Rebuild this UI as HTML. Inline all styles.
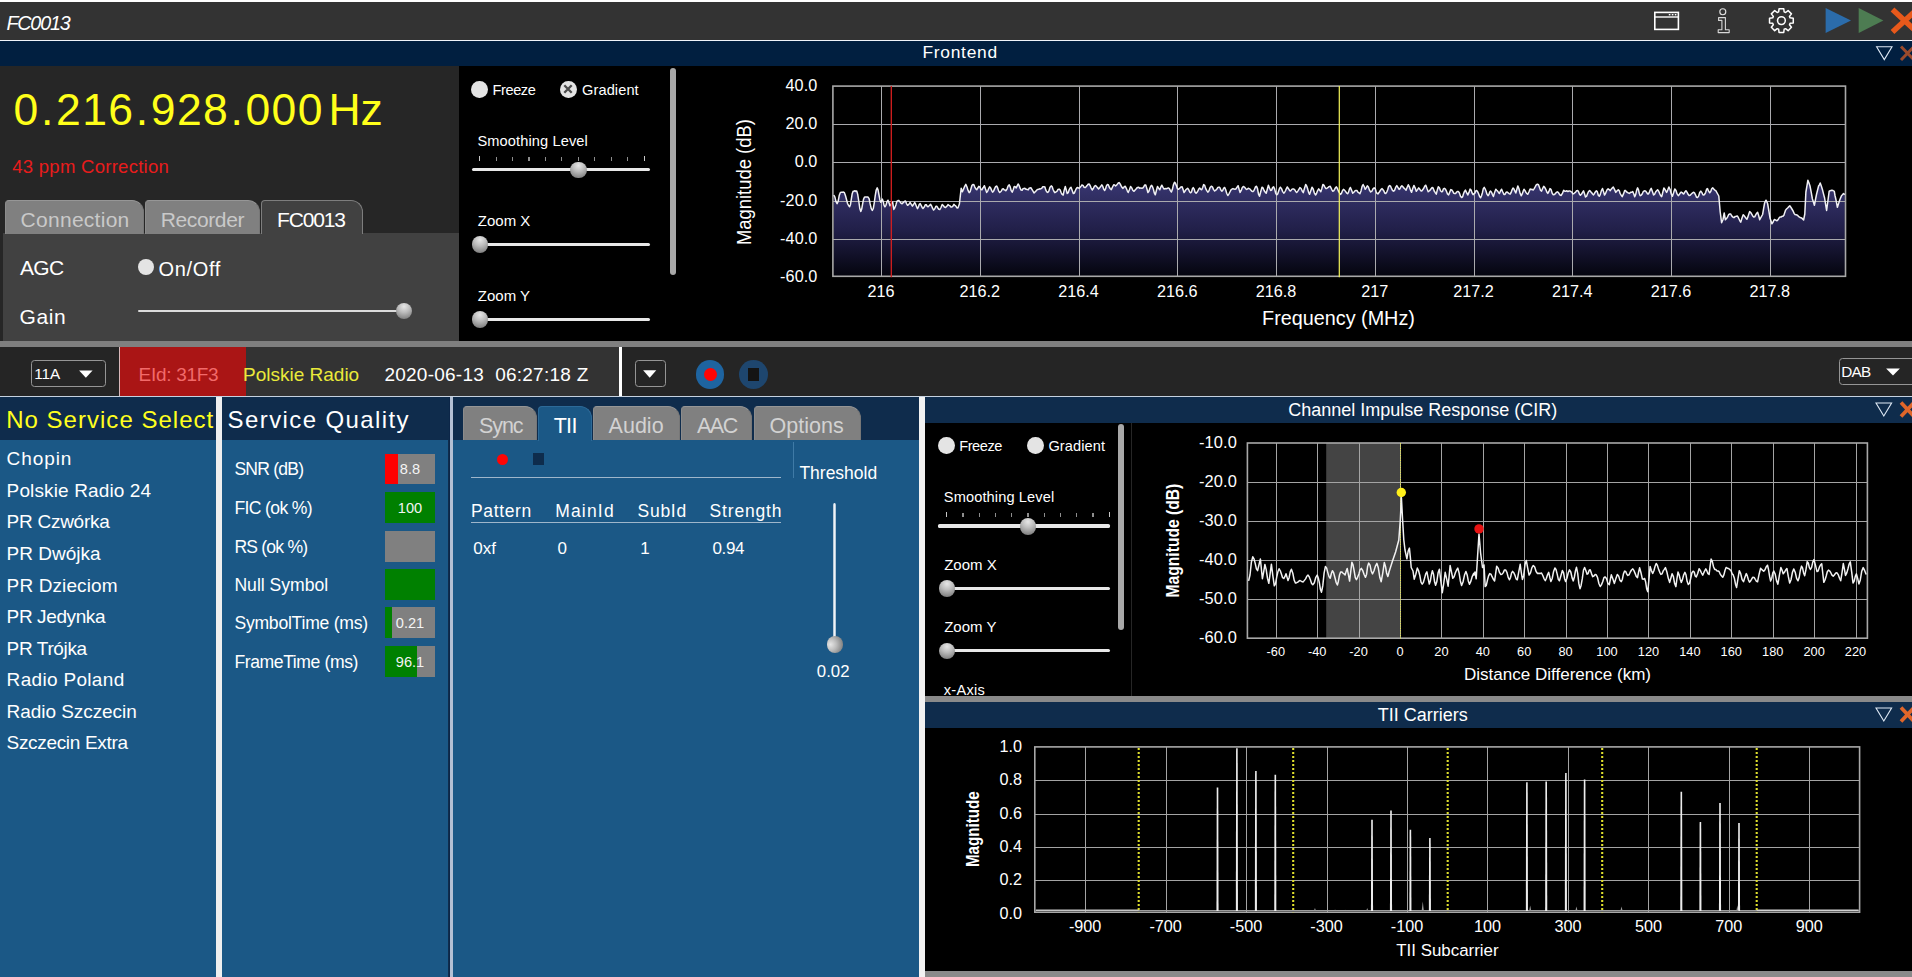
<!DOCTYPE html>
<html lang="en"><head><meta charset="utf-8"><title>FC0013</title>
<style>
html,body{margin:0;padding:0;}
body{width:1912px;height:977px;overflow:hidden;background:#000;position:relative;font-family:"Liberation Sans",sans-serif;}
#root{position:absolute;left:0;top:0;width:1912px;height:977px;overflow:hidden;}
#root div,#root span,#root svg{position:absolute;}
.t{white-space:nowrap;line-height:1;}
.tab{box-sizing:border-box;border:1px solid #8c8c8c;border-top-color:#969696;border-right-color:#777;border-bottom:none;border-radius:4px 12px 0 0;background:#808080;}
.knob{width:16.6px;height:16.6px;border-radius:50%;background:radial-gradient(circle at 50% 22%,#e6e6e6 0%,#bcbcbc 40%,#868686 80%,#6c6c6c 100%);}
.radio{width:16.6px;height:16.8px;border-radius:50%;background:#e4e4e4;}
.track{height:3.2px;background:#e8e8e8;border-radius:1.6px;}
.p{font-style:normal;margin:0 1.27px 0 1.2px;}
svg text{font-family:"Liberation Sans",sans-serif;}
</style></head><body><div id="root">

<div style="left:0px;top:0px;width:1912px;height:2px;background:#ffffff;"></div>
<div style="left:0px;top:2px;width:1912px;height:38px;background:#333333;"></div>
<div style="left:0px;top:39.6px;width:1912px;height:1.5px;background:#f0f4fa;"></div>
<span class="t" id="t1" style="left:6.4px;top:14.28px;font-size:19.7px;color:#fff;font-style:italic;letter-spacing:-1.13px;">FC0013</span>
<div style="left:0px;top:41px;width:1912px;height:25px;background:#011f40;"></div>
<span class="t" id="t2" style="left:922.4px;top:44.00px;font-size:17.4px;color:#fff;letter-spacing:0.74px;">Frontend</span>
<svg style="left:0;top:0" width="1912" height="70" viewBox="0 0 1912 70">
<rect x="1654.8" y="12.4" width="23.6" height="17" fill="none" stroke="#fff" stroke-width="1.6"/>
<line x1="1654.8" y1="17" x2="1678.4" y2="17" stroke="#fff" stroke-width="1.4"/>
<rect x="1668.8" y="14" width="1.6" height="1.4" fill="#fff"/>
<rect x="1671.8" y="14" width="1.6" height="1.4" fill="#fff"/>
<rect x="1674.8" y="14" width="1.6" height="1.4" fill="#fff"/>
<circle cx="1722.8" cy="11.7" r="3.0" fill="none" stroke="#e2e2e2" stroke-width="1.15"/>
<path d="M1718.6 17.6 H1725.4 V29.8 H1729.2 V32.6 H1718.2 V29.8 H1721.9 V20.4 H1718.6 Z" fill="none" stroke="#d8d8d8" stroke-width="1.1" stroke-linejoin="round"/>
<path d="M1779.04 8.73 L1783.76 8.73 L1784.14 11.92 L1785.59 12.52 L1788.12 10.54 L1791.46 13.88 L1789.48 16.41 L1790.08 17.86 L1793.27 18.24 L1793.27 22.96 L1790.08 23.34 L1789.48 24.79 L1791.46 27.32 L1788.12 30.66 L1785.59 28.68 L1784.14 29.28 L1783.76 32.47 L1779.04 32.47 L1778.66 29.28 L1777.21 28.68 L1774.68 30.66 L1771.34 27.32 L1773.32 24.79 L1772.72 23.34 L1769.53 22.96 L1769.53 18.24 L1772.72 17.86 L1773.32 16.41 L1771.34 13.88 L1774.68 10.54 L1777.21 12.52 L1778.66 11.92 Z" fill="none" stroke="#fff" stroke-width="1.5" stroke-linejoin="round"/>
<circle cx="1781.4" cy="20.6" r="3.9" fill="none" stroke="#fff" stroke-width="1.5"/>
<path d="M1825.6 8 L1851 20.5 L1825.6 33 Z" fill="#2b6cab"/>
<path d="M1858.7 8 L1883.4 20.5 L1858.7 33 Z" fill="#4d7c52"/>
<path d="M1892.5 9.5 L1917 32 M1917 9.5 L1892.5 32" stroke="#e8591b" stroke-width="5.5" fill="none"/>
<path d="M1876.6 46.8 H1892 L1884.3 59.6 Z" fill="none" stroke="#dfe9f5" stroke-width="1.1"/>
<path d="M1901 46.5 L1914 60 M1914 46.5 L1901 60" stroke="#9a4a2c" stroke-width="3" fill="none"/>
</svg>
<div style="left:0px;top:66px;width:459px;height:275px;background:#262626;"></div>
<span class="t" style="left:13.6px;top:87.76px;font-size:44.5px;color:#ffff1a;letter-spacing:1.41px;">0<i class="p">.</i>216<i class="p">.</i>928<i class="p">.</i>000</span>
<span class="t" style="left:328.4px;top:87.76px;font-size:44.5px;color:#ffff1a;letter-spacing:0px;">Hz</span>
<span class="t" id="t3" style="left:12.2px;top:157.96px;font-size:18.5px;color:#e81c1c;letter-spacing:0.28px;">43 ppm Correction</span>
<div style="left:3px;top:233px;width:456px;height:108px;background:#414141;"></div>
<div class="tab" style="left:5px;top:200px;width:139px;height:34px;"></div>
<div class="tab" style="left:145px;top:200px;width:115px;height:34px;"></div>
<div class="tab" style="left:261px;top:200px;width:102px;height:34px;background:#414141;border-color:#7e7e7e;"></div>
<span class="t" id="t4" style="left:20.6px;top:209.04px;font-size:21px;color:#c9c9c9;letter-spacing:0.27px;">Connection</span>
<span class="t" id="t5" style="left:160.8px;top:209.04px;font-size:21px;color:#c9c9c9;letter-spacing:-0.39px;">Recorder</span>
<span class="t" id="t6" style="left:277px;top:209.04px;font-size:21px;color:#fff;letter-spacing:-1.15px;">FC0013</span>
<span class="t" id="t7" style="left:20px;top:257.34px;font-size:21px;color:#fff;letter-spacing:-0.7px;">AGC</span>
<div class="radio" style="left:137.6px;top:258.6px;"></div>
<span class="t" id="t8" style="left:158.6px;top:258.83px;font-size:20px;color:#fff;letter-spacing:0.65px;">On/Off</span>
<span class="t" id="t9" style="left:19.6px;top:305.74px;font-size:21px;color:#fff;letter-spacing:0.60px;">Gain</span>
<div class="track" style="left:138px;top:309.6px;width:266px;height:2.6px;background:#dcdcdc;"></div>
<div class="knob" style="left:395.6px;top:302.6px;"></div>
<div style="left:459px;top:66px;width:1453px;height:275px;background:#000000;"></div>
<div class="radio" style="left:471.2px;top:81.2px;"></div>
<span class="t" style="left:492.6px;top:82.57px;font-size:14.6px;color:#fff;letter-spacing:-0.45px;">Freeze</span>
<div class="radio" style="left:560.2px;top:81.2px;"></div>
<svg style="left:560.2px;top:81.2px" width="16" height="16" viewBox="0 0 16 16"><path d="M4.3 4.3 L11.7 11.7 M11.7 4.3 L4.3 11.7" stroke="#4c4c4c" stroke-width="2.3" fill="none"/></svg>
<span class="t" style="left:582px;top:82.57px;font-size:14.6px;color:#fff;letter-spacing:0.1px;">Gradient</span>
<span class="t" style="left:477.4px;top:133.87px;font-size:14.6px;color:#fff;letter-spacing:0.12px;">Smoothing Level</span>
<div style="left:479.09999999999997px;top:156.1px;width:1.2px;height:5px;background:#c8c8c8;"></div>
<div style="left:495.5px;top:157.3px;width:1.2px;height:3.8px;background:#8e8e8e;"></div>
<div style="left:512.0px;top:157.3px;width:1.2px;height:3.8px;background:#8e8e8e;"></div>
<div style="left:528.4px;top:157.3px;width:1.2px;height:3.8px;background:#8e8e8e;"></div>
<div style="left:544.9px;top:157.3px;width:1.2px;height:3.8px;background:#8e8e8e;"></div>
<div style="left:561.3px;top:157.3px;width:1.2px;height:3.8px;background:#8e8e8e;"></div>
<div style="left:577.6999999999999px;top:157.3px;width:1.2px;height:3.8px;background:#8e8e8e;"></div>
<div style="left:594.1999999999999px;top:157.3px;width:1.2px;height:3.8px;background:#8e8e8e;"></div>
<div style="left:610.6px;top:157.3px;width:1.2px;height:3.8px;background:#8e8e8e;"></div>
<div style="left:627.1px;top:157.3px;width:1.2px;height:3.8px;background:#8e8e8e;"></div>
<div style="left:643.5px;top:156.1px;width:1.2px;height:5px;background:#c8c8c8;"></div>
<div class="track" style="left:471.6px;top:168.2px;width:178.6px;"></div>
<div class="knob" style="left:570.4px;top:161.8px;"></div>
<span class="t" style="left:477.8px;top:213.27px;font-size:15px;color:#fff;">Zoom X</span>
<div class="track" style="left:476px;top:243px;width:174.2px;"></div>
<div class="knob" style="left:471.8px;top:236.4px;"></div>
<span class="t" style="left:477.8px;top:288.47px;font-size:15px;color:#fff;">Zoom Y</span>
<div class="track" style="left:476px;top:317.6px;width:174.2px;"></div>
<div class="knob" style="left:471.8px;top:311.2px;"></div>
<div style="left:670.2px;top:68px;width:6px;height:207px;background:#a8a8a8;border-radius:3px;"></div>
<svg style="left:0;top:66px" width="1912" height="275" viewBox="0 66 1912 275">
<defs><linearGradient id="sg" gradientUnits="userSpaceOnUse" x1="0" y1="184" x2="0" y2="277"><stop offset="0" stop-color="#37356f"/><stop offset="0.5" stop-color="#211f48"/><stop offset="1" stop-color="#04040d"/></linearGradient></defs>
<polygon points="833.4,276.3 833.8,195.0 834.9,197.1 836.0,201.6 837.1,203.7 838.2,201.2 839.3,195.2 840.4,192.4 841.4,192.3 842.4,192.2 843.4,192.0 844.4,192.7 845.5,195.7 846.5,199.5 847.5,203.3 848.6,205.5 849.6,206.8 850.5,204.4 851.4,198.7 852.2,193.7 853.1,191.2 854.0,191.3 854.9,190.7 855.8,191.4 856.7,191.0 857.7,194.4 858.8,201.3 859.8,208.5 860.8,211.4 861.7,209.1 862.6,204.0 863.5,199.4 864.4,197.3 865.3,196.9 866.2,197.0 867.1,196.9 868.0,197.1 869.1,198.7 870.1,203.7 871.2,208.4 872.3,210.4 873.3,208.5 874.3,202.6 875.2,195.8 876.2,190.0 877.2,187.9 878.1,190.1 879.0,195.0 879.9,199.9 880.8,202.2 881.5,201.0 882.3,199.1 883.2,201.4 884.0,205.1 884.9,206.8 885.9,205.3 887.0,201.7 888.0,200.2 889.0,202.8 890.0,205.8 890.9,204.7 891.7,202.8 892.6,202.2 893.8,209.4 894.8,207.8 895.9,204.9 896.9,201.3 898.0,200.5 899.0,200.6 900.0,201.9 901.1,203.3 902.1,203.7 903.2,202.6 904.4,201.5 905.5,201.0 906.5,203.6 907.6,205.3 908.8,204.4 910.1,202.4 911.3,204.4 912.4,206.1 913.5,204.5 914.6,202.5 915.6,204.2 916.6,206.7 917.5,208.6 918.4,206.9 919.3,204.3 920.2,203.6 921.1,205.3 922.1,207.4 923.0,208.4 924.2,207.1 925.4,204.7 926.3,204.7 927.2,206.3 928.1,206.7 929.4,205.5 930.6,204.3 931.6,206.0 932.6,208.4 933.6,210.0 934.8,208.7 935.9,206.2 936.9,206.3 937.9,208.0 938.8,209.3 939.8,209.6 941.0,207.5 942.2,204.5 943.3,205.5 944.4,207.0 945.5,207.5 946.8,206.4 948.0,204.6 949.0,205.4 949.9,205.7 950.9,206.9 951.9,207.0 952.9,206.2 953.9,204.4 954.9,205.3 955.9,206.1 956.9,207.8 957.9,208.0 959.4,204.0 960.3,196.0 961.2,188.2 962.4,191.7 963.5,189.3 964.7,186.3 965.8,184.4 966.9,186.7 968.1,190.6 969.2,192.6 970.1,191.8 971.1,188.2 972.0,185.3 972.9,184.5 973.9,184.8 974.8,187.1 975.8,188.9 976.8,189.7 977.8,188.0 978.8,186.3 979.8,186.9 980.8,189.3 981.9,189.8 982.7,188.3 983.5,187.2 984.4,185.7 985.5,189.1 986.7,192.4 987.7,191.1 988.7,188.5 989.6,186.8 990.6,187.9 991.6,190.4 992.6,192.2 993.6,191.1 994.6,188.6 995.6,186.7 996.6,186.0 997.6,187.7 998.6,190.9 999.7,192.5 1000.6,191.7 1001.5,190.8 1002.4,188.9 1003.3,188.8 1004.1,189.7 1005.0,190.0 1005.8,190.8 1007.0,189.1 1008.1,186.0 1009.2,184.9 1010.2,186.9 1011.2,190.7 1012.2,192.2 1013.2,189.7 1014.2,186.6 1015.2,186.8 1016.2,187.9 1017.2,185.9 1018.1,184.0 1019.1,185.4 1020.1,188.2 1021.1,190.1 1022.1,190.3 1023.0,188.7 1024.0,188.5 1024.9,188.3 1026.1,189.3 1027.3,189.6 1028.2,189.9 1029.1,188.3 1030.0,187.9 1030.9,187.7 1031.9,189.3 1033.0,191.2 1034.0,193.0 1035.0,192.0 1035.9,191.1 1036.9,189.9 1037.8,189.4 1038.7,189.3 1039.6,188.8 1040.5,188.9 1041.7,188.3 1042.8,186.8 1043.9,186.7 1044.9,187.0 1045.8,190.1 1046.8,191.8 1047.7,192.4 1048.9,191.0 1050.0,187.2 1051.2,185.9 1052.1,186.6 1053.0,189.3 1053.9,191.3 1054.8,192.6 1055.9,192.0 1056.9,191.3 1058.0,189.5 1059.1,189.1 1060.1,189.8 1061.1,192.6 1062.1,194.3 1063.2,195.0 1064.2,190.2 1065.3,186.4 1066.2,189.8 1067.2,193.5 1068.2,192.7 1069.1,189.9 1070.1,188.0 1071.0,187.2 1072.2,190.6 1073.3,193.6 1074.3,193.1 1075.3,190.7 1076.2,188.8 1077.2,187.5 1078.3,187.8 1079.3,188.3 1080.2,187.3 1081.1,186.1 1081.9,184.9 1083.0,185.4 1084.1,187.3 1085.2,187.6 1086.1,186.8 1087.1,185.6 1088.1,184.2 1089.1,184.0 1090.1,185.5 1091.2,188.1 1092.2,190.0 1093.3,188.5 1094.4,186.3 1095.4,185.5 1096.5,186.3 1097.5,187.8 1098.6,188.9 1099.7,187.8 1100.7,186.4 1101.8,184.8 1102.8,186.4 1103.8,189.4 1104.7,190.5 1105.6,188.7 1106.4,185.9 1107.3,184.6 1108.3,184.8 1109.3,187.3 1110.3,188.7 1111.3,189.6 1112.5,187.0 1113.7,184.8 1114.7,184.9 1115.6,186.0 1116.5,185.2 1117.4,184.1 1118.3,183.0 1119.2,182.6 1120.1,183.9 1121.0,185.7 1121.9,187.3 1122.8,188.4 1123.7,187.7 1124.5,186.4 1125.3,186.3 1126.3,188.3 1127.3,190.8 1128.2,192.5 1129.4,189.8 1130.6,186.5 1131.7,187.9 1132.9,190.5 1134.0,191.3 1134.9,190.2 1135.8,189.2 1136.8,188.0 1137.7,187.5 1138.7,187.2 1139.7,188.3 1140.8,187.9 1141.8,188.2 1142.8,188.0 1143.8,186.7 1144.8,185.0 1145.8,185.1 1146.9,188.7 1147.9,192.6 1148.9,191.3 1149.8,188.5 1150.8,186.1 1151.7,185.4 1152.6,186.9 1153.5,189.6 1154.4,193.2 1155.3,194.8 1156.4,190.5 1157.5,186.4 1158.6,188.1 1159.8,189.8 1160.8,187.1 1161.8,185.2 1163.0,187.3 1164.1,189.0 1165.2,188.6 1166.3,188.7 1167.4,188.3 1168.4,187.9 1169.4,188.6 1170.4,190.6 1171.4,192.0 1172.4,189.3 1173.4,184.9 1174.5,182.2 1175.4,183.1 1176.4,185.6 1177.4,188.7 1178.4,189.3 1179.3,188.7 1180.2,187.8 1181.1,186.9 1182.1,186.7 1183.0,189.3 1184.0,192.5 1184.9,191.3 1185.8,189.8 1186.7,189.0 1187.6,188.3 1188.6,189.5 1189.7,192.0 1190.7,192.8 1191.5,192.0 1192.4,188.7 1193.2,187.6 1194.2,189.2 1195.1,192.3 1196.1,193.3 1197.0,192.2 1197.9,190.9 1198.8,189.0 1199.7,188.0 1200.7,189.3 1201.7,189.7 1202.7,187.5 1203.6,184.6 1204.7,185.4 1205.7,188.6 1206.8,190.7 1207.8,192.2 1209.0,190.7 1210.1,187.6 1211.3,186.2 1212.4,186.9 1213.6,189.6 1214.7,191.0 1215.8,190.2 1216.9,189.0 1217.9,187.4 1219.0,187.1 1219.9,187.7 1220.9,190.1 1221.9,191.2 1222.8,190.3 1223.7,188.1 1224.7,187.5 1225.7,189.7 1226.7,193.2 1227.8,195.5 1228.8,194.1 1229.9,192.0 1231.0,189.8 1232.1,189.0 1233.0,188.6 1233.9,189.1 1234.9,189.2 1235.8,189.0 1236.9,187.4 1238.1,185.7 1239.1,189.3 1240.1,192.4 1241.2,190.4 1242.2,187.8 1243.3,186.5 1244.4,187.1 1245.4,188.2 1246.5,189.4 1247.4,189.1 1248.3,188.3 1249.1,188.6 1250.1,189.1 1251.0,190.2 1251.9,191.2 1252.8,191.6 1253.8,190.7 1254.7,188.7 1255.6,186.6 1256.5,186.3 1257.5,188.6 1258.5,194.1 1259.5,196.2 1260.7,191.8 1262.0,187.2 1263.0,187.9 1264.1,190.5 1265.1,192.1 1266.2,193.3 1267.3,189.2 1268.4,185.2 1269.5,188.0 1270.6,190.5 1271.6,190.1 1272.6,187.6 1273.6,186.8 1274.6,188.9 1275.7,193.3 1276.7,194.8 1277.7,194.0 1278.6,191.2 1279.5,188.4 1280.4,187.2 1281.5,188.6 1282.7,191.6 1283.8,193.2 1284.7,192.1 1285.6,190.5 1286.5,188.3 1287.3,187.0 1288.5,188.7 1289.7,190.7 1290.7,190.9 1291.8,189.4 1292.8,188.9 1293.8,189.0 1294.8,189.9 1295.7,191.4 1296.7,192.5 1297.8,191.1 1298.9,189.3 1299.9,187.6 1301.1,188.5 1302.2,191.0 1303.3,192.6 1304.5,188.2 1305.7,184.4 1306.7,186.1 1307.7,189.1 1308.6,192.3 1309.6,194.3 1310.8,190.8 1312.0,187.2 1313.2,189.0 1314.3,192.8 1315.5,195.0 1316.5,193.5 1317.6,190.6 1318.7,188.9 1319.7,190.3 1320.8,191.7 1321.9,188.2 1322.9,184.5 1323.9,185.1 1324.8,186.8 1325.7,188.4 1326.7,188.5 1327.8,187.7 1329.0,186.6 1330.2,186.2 1331.0,187.9 1331.9,189.8 1332.7,191.2 1333.7,190.8 1334.6,189.3 1335.5,187.7 1336.4,186.9 1337.4,188.5 1338.4,191.0 1339.5,192.9 1340.5,194.4 1341.5,193.3 1342.5,190.6 1343.4,189.4 1344.5,190.1 1345.5,191.4 1346.5,192.8 1347.6,193.7 1348.5,192.4 1349.4,189.1 1350.4,187.5 1351.5,190.1 1352.7,193.2 1353.8,192.2 1354.9,190.9 1355.9,190.4 1356.9,190.5 1357.9,192.1 1358.9,192.8 1359.9,193.7 1361.0,190.9 1362.1,186.4 1363.1,184.5 1364.2,186.5 1365.2,189.3 1366.2,187.8 1367.3,185.9 1368.4,187.0 1369.6,190.4 1370.7,192.0 1371.9,191.2 1373.0,188.8 1374.2,187.8 1375.1,188.3 1376.0,191.2 1377.0,193.4 1377.9,193.9 1379.0,192.6 1380.0,191.0 1381.1,189.4 1382.1,188.6 1383.0,189.7 1383.9,191.0 1384.8,193.1 1385.7,193.5 1386.7,192.1 1387.7,189.8 1388.6,186.5 1389.6,185.6 1390.6,186.2 1391.6,188.7 1392.6,190.7 1393.6,191.2 1394.7,190.1 1395.8,187.1 1396.8,185.6 1397.9,187.4 1399.1,189.4 1400.0,188.7 1400.9,186.8 1401.9,185.7 1402.9,186.7 1404.0,188.2 1405.0,189.0 1406.1,190.1 1407.2,187.3 1408.3,184.8 1409.4,186.9 1410.5,190.1 1411.6,192.3 1412.7,188.5 1413.9,185.4 1415.1,187.8 1416.3,191.2 1417.5,189.6 1418.7,187.9 1419.7,189.1 1420.7,190.7 1421.7,191.0 1422.7,189.7 1423.8,188.3 1424.8,186.0 1425.8,185.2 1427.0,188.6 1428.2,191.7 1429.2,191.0 1430.1,190.1 1431.1,188.7 1432.1,187.5 1433.1,188.0 1434.2,191.0 1435.3,192.7 1436.3,194.1 1437.3,189.9 1438.3,186.8 1439.4,187.8 1440.5,190.8 1441.6,191.8 1442.5,191.5 1443.4,188.8 1444.3,188.3 1445.4,189.1 1446.4,191.1 1447.5,194.0 1448.6,194.9 1449.7,192.2 1450.8,189.6 1451.8,190.0 1452.8,191.4 1453.7,193.3 1454.7,193.5 1455.6,193.6 1456.5,192.2 1457.4,191.6 1458.3,191.4 1459.4,193.0 1460.5,196.3 1461.6,197.5 1462.6,196.9 1463.5,193.7 1464.5,191.4 1465.4,190.1 1466.6,192.6 1467.8,195.0 1469.0,192.4 1470.1,189.1 1471.1,190.1 1472.1,193.0 1473.1,194.7 1474.0,193.7 1474.9,193.1 1475.8,190.9 1476.7,190.5 1477.6,191.6 1478.6,193.8 1479.6,196.6 1480.6,197.8 1481.5,195.8 1482.4,192.7 1483.3,188.6 1484.2,187.4 1485.1,188.8 1486.1,191.3 1487.0,194.2 1488.0,195.7 1488.9,194.5 1489.7,192.1 1490.6,191.1 1491.5,192.2 1492.5,194.6 1493.4,196.5 1494.6,192.4 1495.8,189.3 1496.7,190.3 1497.6,191.1 1498.5,192.4 1499.4,193.4 1500.5,191.0 1501.6,189.2 1502.7,191.8 1503.9,194.4 1505.0,194.4 1506.1,192.3 1507.2,192.0 1508.2,192.9 1509.1,193.6 1510.1,194.2 1511.1,192.5 1512.0,189.9 1513.0,188.0 1514.0,189.1 1514.9,191.2 1515.8,193.0 1516.8,189.5 1517.8,185.9 1518.9,188.5 1520.1,193.4 1521.3,195.8 1522.2,193.9 1523.1,191.4 1524.0,189.3 1524.9,190.4 1525.9,192.4 1526.8,193.5 1527.8,194.3 1528.9,192.0 1530.1,189.0 1531.1,189.5 1532.1,189.3 1533.2,190.0 1534.2,188.6 1535.3,186.7 1536.4,184.6 1537.4,184.2 1538.5,184.7 1539.5,187.5 1540.6,190.4 1541.6,191.1 1542.6,188.5 1543.7,186.3 1544.7,187.3 1545.8,189.3 1546.8,192.0 1547.8,193.4 1548.9,191.5 1550.0,188.6 1551.1,189.6 1552.2,193.2 1553.3,194.7 1554.3,194.6 1555.3,193.6 1556.3,192.5 1557.4,191.8 1558.3,192.3 1559.3,194.0 1560.3,195.3 1561.2,195.4 1562.5,193.1 1563.7,190.2 1564.8,191.2 1565.8,191.2 1566.9,190.7 1567.9,191.6 1569.0,190.9 1570.1,191.0 1571.0,191.6 1571.9,192.1 1572.8,193.8 1573.7,193.7 1574.7,192.8 1575.6,192.2 1576.6,190.7 1577.6,190.6 1578.5,191.6 1579.4,194.0 1580.4,195.3 1581.4,194.3 1582.5,192.3 1583.5,190.8 1584.5,193.7 1585.5,197.0 1586.6,196.2 1587.6,193.6 1588.7,191.3 1589.7,190.6 1590.6,191.6 1591.5,192.5 1592.4,193.8 1593.3,194.9 1594.3,193.7 1595.3,192.0 1596.4,190.7 1597.3,191.8 1598.3,195.2 1599.3,196.3 1600.3,194.4 1601.4,190.6 1602.5,188.5 1603.5,191.4 1604.5,195.1 1605.4,193.7 1606.3,191.5 1607.2,189.5 1608.1,188.8 1609.2,189.6 1610.2,190.7 1611.2,189.2 1612.3,187.9 1613.3,187.0 1614.6,189.6 1615.8,192.4 1617.0,190.9 1618.3,189.7 1619.3,190.8 1620.2,193.7 1621.2,195.2 1622.2,196.6 1623.5,193.9 1624.7,190.4 1625.6,190.6 1626.6,192.0 1627.5,192.3 1628.5,193.1 1629.5,193.4 1630.6,192.3 1631.6,192.3 1632.7,191.5 1633.7,193.8 1634.7,196.7 1635.7,194.4 1636.6,190.3 1637.6,187.9 1638.4,189.5 1639.3,193.5 1640.2,195.7 1641.3,195.1 1642.3,193.7 1643.4,191.3 1644.4,190.8 1645.5,190.9 1646.5,192.2 1647.5,193.9 1648.5,193.9 1649.4,192.1 1650.3,189.8 1651.2,188.3 1652.4,191.5 1653.6,194.9 1654.6,194.3 1655.6,192.0 1656.6,190.7 1657.6,189.8 1658.7,191.2 1659.7,193.6 1660.7,195.7 1661.7,196.6 1662.8,192.3 1663.9,187.9 1664.8,189.1 1665.7,190.9 1666.6,192.4 1667.7,190.1 1668.9,187.0 1670.1,189.5 1671.2,193.9 1672.4,196.3 1673.6,192.8 1674.8,188.9 1676.0,190.5 1677.1,193.9 1678.3,195.7 1679.3,194.5 1680.2,193.1 1681.2,192.1 1682.1,192.6 1682.9,193.5 1683.8,194.0 1684.9,191.9 1685.9,190.7 1687.0,192.1 1688.1,194.3 1689.1,195.6 1690.2,195.2 1691.3,194.0 1692.3,193.2 1693.4,192.3 1694.4,192.7 1695.5,194.8 1696.5,197.3 1697.5,197.5 1698.6,196.1 1699.7,192.5 1700.8,191.1 1701.8,192.4 1702.9,194.7 1703.9,195.1 1704.8,194.1 1705.7,192.3 1706.6,189.2 1707.5,188.6 1708.6,191.2 1709.7,192.8 1710.7,191.5 1711.7,188.7 1712.7,187.8 1713.7,188.9 1714.8,190.1 1715.8,190.7 1718.8,196.0 1720.2,212.0 1721.6,222.7 1723.0,219.5 1724.2,213.0 1725.4,219.8 1726.5,218.6 1727.5,217.1 1728.6,214.7 1729.7,214.0 1730.6,213.9 1731.5,215.5 1732.4,216.7 1733.3,217.4 1734.3,217.4 1735.3,216.4 1736.3,216.3 1737.3,215.9 1738.4,217.7 1739.6,220.3 1740.7,222.2 1742.0,218.1 1743.2,214.8 1744.1,215.6 1745.1,217.0 1746.0,218.2 1746.9,219.3 1747.9,216.9 1748.8,214.0 1749.7,211.6 1750.7,212.5 1751.7,214.1 1752.7,215.9 1753.7,217.0 1754.7,216.8 1755.7,214.8 1756.7,213.2 1757.6,212.3 1758.7,215.8 1759.7,219.7 1762.6,214.5 1763.6,208.6 1764.6,203.0 1766.0,200.2 1766.8,201.8 1767.6,203.5 1768.8,210.5 1770.0,218.0 1771.0,220.9 1771.9,223.7 1772.8,222.6 1773.6,220.8 1774.5,219.5 1775.8,220.1 1777.0,220.8 1778.0,219.8 1779.0,218.0 1780.0,217.0 1781.0,217.1 1782.0,216.3 1783.0,216.2 1783.9,215.3 1784.8,212.4 1785.6,210.1 1786.5,209.0 1787.6,208.0 1788.7,206.9 1789.8,205.8 1791.0,207.5 1792.2,209.5 1793.1,211.0 1794.1,213.4 1795.0,214.5 1796.2,214.8 1797.5,215.2 1798.8,216.7 1800.0,217.5 1801.0,217.8 1802.0,218.2 1802.8,219.3 1803.6,220.0 1804.8,214.0 1805.9,192.0 1806.9,186.2 1807.9,180.2 1809.0,183.1 1810.0,186.0 1811.2,192.2 1812.4,199.0 1813.4,202.1 1814.4,205.3 1815.5,199.5 1816.6,194.0 1817.6,190.0 1818.6,186.0 1819.4,184.8 1820.2,183.0 1821.3,186.1 1822.4,189.5 1823.5,193.9 1824.6,198.0 1825.6,204.3 1826.6,210.4 1828.0,200.0 1829.2,191.2 1830.1,190.8 1830.9,190.4 1831.8,190.2 1833.0,190.5 1834.3,191.4 1835.0,195.5 1835.8,199.0 1836.6,203.0 1837.4,207.3 1838.4,204.1 1839.4,201.0 1840.5,198.1 1841.6,195.5 1842.5,194.7 1843.5,193.5 1844.8,194.6 1845.0,276.3" fill="url(#sg)"/>
<line x1="881.5" y1="86.1" x2="881.5" y2="276.3" stroke="#aaaaae" stroke-width="1"/>
<line x1="980.5" y1="86.1" x2="980.5" y2="276.3" stroke="#aaaaae" stroke-width="1"/>
<line x1="1079.5" y1="86.1" x2="1079.5" y2="276.3" stroke="#aaaaae" stroke-width="1"/>
<line x1="1177.5" y1="86.1" x2="1177.5" y2="276.3" stroke="#aaaaae" stroke-width="1"/>
<line x1="1276.5" y1="86.1" x2="1276.5" y2="276.3" stroke="#aaaaae" stroke-width="1"/>
<line x1="1375.5" y1="86.1" x2="1375.5" y2="276.3" stroke="#aaaaae" stroke-width="1"/>
<line x1="1474.5" y1="86.1" x2="1474.5" y2="276.3" stroke="#aaaaae" stroke-width="1"/>
<line x1="1572.5" y1="86.1" x2="1572.5" y2="276.3" stroke="#aaaaae" stroke-width="1"/>
<line x1="1671.5" y1="86.1" x2="1671.5" y2="276.3" stroke="#aaaaae" stroke-width="1"/>
<line x1="1770.5" y1="86.1" x2="1770.5" y2="276.3" stroke="#aaaaae" stroke-width="1"/>
<line x1="832.9" y1="124.5" x2="1845.5" y2="124.5" stroke="#aaaaae" stroke-width="1"/>
<line x1="832.9" y1="162.5" x2="1845.5" y2="162.5" stroke="#aaaaae" stroke-width="1"/>
<line x1="832.9" y1="201.5" x2="1845.5" y2="201.5" stroke="#aaaaae" stroke-width="1"/>
<line x1="832.9" y1="239.5" x2="1845.5" y2="239.5" stroke="#aaaaae" stroke-width="1"/>
<rect x="832.9" y="86.1" width="1012.6" height="190.2" fill="none" stroke="#a8a8a8" stroke-width="1.6"/>
<polyline points="833.8,195.0 834.9,197.1 836.0,201.6 837.1,203.7 838.2,201.2 839.3,195.2 840.4,192.4 841.4,192.3 842.4,192.2 843.4,192.0 844.4,192.7 845.5,195.7 846.5,199.5 847.5,203.3 848.6,205.5 849.6,206.8 850.5,204.4 851.4,198.7 852.2,193.7 853.1,191.2 854.0,191.3 854.9,190.7 855.8,191.4 856.7,191.0 857.7,194.4 858.8,201.3 859.8,208.5 860.8,211.4 861.7,209.1 862.6,204.0 863.5,199.4 864.4,197.3 865.3,196.9 866.2,197.0 867.1,196.9 868.0,197.1 869.1,198.7 870.1,203.7 871.2,208.4 872.3,210.4 873.3,208.5 874.3,202.6 875.2,195.8 876.2,190.0 877.2,187.9 878.1,190.1 879.0,195.0 879.9,199.9 880.8,202.2 881.5,201.0 882.3,199.1 883.2,201.4 884.0,205.1 884.9,206.8 885.9,205.3 887.0,201.7 888.0,200.2 889.0,202.8 890.0,205.8 890.9,204.7 891.7,202.8 892.6,202.2 893.8,209.4 894.8,207.8 895.9,204.9 896.9,201.3 898.0,200.5 899.0,200.6 900.0,201.9 901.1,203.3 902.1,203.7 903.2,202.6 904.4,201.5 905.5,201.0 906.5,203.6 907.6,205.3 908.8,204.4 910.1,202.4 911.3,204.4 912.4,206.1 913.5,204.5 914.6,202.5 915.6,204.2 916.6,206.7 917.5,208.6 918.4,206.9 919.3,204.3 920.2,203.6 921.1,205.3 922.1,207.4 923.0,208.4 924.2,207.1 925.4,204.7 926.3,204.7 927.2,206.3 928.1,206.7 929.4,205.5 930.6,204.3 931.6,206.0 932.6,208.4 933.6,210.0 934.8,208.7 935.9,206.2 936.9,206.3 937.9,208.0 938.8,209.3 939.8,209.6 941.0,207.5 942.2,204.5 943.3,205.5 944.4,207.0 945.5,207.5 946.8,206.4 948.0,204.6 949.0,205.4 949.9,205.7 950.9,206.9 951.9,207.0 952.9,206.2 953.9,204.4 954.9,205.3 955.9,206.1 956.9,207.8 957.9,208.0 959.4,204.0 960.3,196.0 961.2,188.2 962.4,191.7 963.5,189.3 964.7,186.3 965.8,184.4 966.9,186.7 968.1,190.6 969.2,192.6 970.1,191.8 971.1,188.2 972.0,185.3 972.9,184.5 973.9,184.8 974.8,187.1 975.8,188.9 976.8,189.7 977.8,188.0 978.8,186.3 979.8,186.9 980.8,189.3 981.9,189.8 982.7,188.3 983.5,187.2 984.4,185.7 985.5,189.1 986.7,192.4 987.7,191.1 988.7,188.5 989.6,186.8 990.6,187.9 991.6,190.4 992.6,192.2 993.6,191.1 994.6,188.6 995.6,186.7 996.6,186.0 997.6,187.7 998.6,190.9 999.7,192.5 1000.6,191.7 1001.5,190.8 1002.4,188.9 1003.3,188.8 1004.1,189.7 1005.0,190.0 1005.8,190.8 1007.0,189.1 1008.1,186.0 1009.2,184.9 1010.2,186.9 1011.2,190.7 1012.2,192.2 1013.2,189.7 1014.2,186.6 1015.2,186.8 1016.2,187.9 1017.2,185.9 1018.1,184.0 1019.1,185.4 1020.1,188.2 1021.1,190.1 1022.1,190.3 1023.0,188.7 1024.0,188.5 1024.9,188.3 1026.1,189.3 1027.3,189.6 1028.2,189.9 1029.1,188.3 1030.0,187.9 1030.9,187.7 1031.9,189.3 1033.0,191.2 1034.0,193.0 1035.0,192.0 1035.9,191.1 1036.9,189.9 1037.8,189.4 1038.7,189.3 1039.6,188.8 1040.5,188.9 1041.7,188.3 1042.8,186.8 1043.9,186.7 1044.9,187.0 1045.8,190.1 1046.8,191.8 1047.7,192.4 1048.9,191.0 1050.0,187.2 1051.2,185.9 1052.1,186.6 1053.0,189.3 1053.9,191.3 1054.8,192.6 1055.9,192.0 1056.9,191.3 1058.0,189.5 1059.1,189.1 1060.1,189.8 1061.1,192.6 1062.1,194.3 1063.2,195.0 1064.2,190.2 1065.3,186.4 1066.2,189.8 1067.2,193.5 1068.2,192.7 1069.1,189.9 1070.1,188.0 1071.0,187.2 1072.2,190.6 1073.3,193.6 1074.3,193.1 1075.3,190.7 1076.2,188.8 1077.2,187.5 1078.3,187.8 1079.3,188.3 1080.2,187.3 1081.1,186.1 1081.9,184.9 1083.0,185.4 1084.1,187.3 1085.2,187.6 1086.1,186.8 1087.1,185.6 1088.1,184.2 1089.1,184.0 1090.1,185.5 1091.2,188.1 1092.2,190.0 1093.3,188.5 1094.4,186.3 1095.4,185.5 1096.5,186.3 1097.5,187.8 1098.6,188.9 1099.7,187.8 1100.7,186.4 1101.8,184.8 1102.8,186.4 1103.8,189.4 1104.7,190.5 1105.6,188.7 1106.4,185.9 1107.3,184.6 1108.3,184.8 1109.3,187.3 1110.3,188.7 1111.3,189.6 1112.5,187.0 1113.7,184.8 1114.7,184.9 1115.6,186.0 1116.5,185.2 1117.4,184.1 1118.3,183.0 1119.2,182.6 1120.1,183.9 1121.0,185.7 1121.9,187.3 1122.8,188.4 1123.7,187.7 1124.5,186.4 1125.3,186.3 1126.3,188.3 1127.3,190.8 1128.2,192.5 1129.4,189.8 1130.6,186.5 1131.7,187.9 1132.9,190.5 1134.0,191.3 1134.9,190.2 1135.8,189.2 1136.8,188.0 1137.7,187.5 1138.7,187.2 1139.7,188.3 1140.8,187.9 1141.8,188.2 1142.8,188.0 1143.8,186.7 1144.8,185.0 1145.8,185.1 1146.9,188.7 1147.9,192.6 1148.9,191.3 1149.8,188.5 1150.8,186.1 1151.7,185.4 1152.6,186.9 1153.5,189.6 1154.4,193.2 1155.3,194.8 1156.4,190.5 1157.5,186.4 1158.6,188.1 1159.8,189.8 1160.8,187.1 1161.8,185.2 1163.0,187.3 1164.1,189.0 1165.2,188.6 1166.3,188.7 1167.4,188.3 1168.4,187.9 1169.4,188.6 1170.4,190.6 1171.4,192.0 1172.4,189.3 1173.4,184.9 1174.5,182.2 1175.4,183.1 1176.4,185.6 1177.4,188.7 1178.4,189.3 1179.3,188.7 1180.2,187.8 1181.1,186.9 1182.1,186.7 1183.0,189.3 1184.0,192.5 1184.9,191.3 1185.8,189.8 1186.7,189.0 1187.6,188.3 1188.6,189.5 1189.7,192.0 1190.7,192.8 1191.5,192.0 1192.4,188.7 1193.2,187.6 1194.2,189.2 1195.1,192.3 1196.1,193.3 1197.0,192.2 1197.9,190.9 1198.8,189.0 1199.7,188.0 1200.7,189.3 1201.7,189.7 1202.7,187.5 1203.6,184.6 1204.7,185.4 1205.7,188.6 1206.8,190.7 1207.8,192.2 1209.0,190.7 1210.1,187.6 1211.3,186.2 1212.4,186.9 1213.6,189.6 1214.7,191.0 1215.8,190.2 1216.9,189.0 1217.9,187.4 1219.0,187.1 1219.9,187.7 1220.9,190.1 1221.9,191.2 1222.8,190.3 1223.7,188.1 1224.7,187.5 1225.7,189.7 1226.7,193.2 1227.8,195.5 1228.8,194.1 1229.9,192.0 1231.0,189.8 1232.1,189.0 1233.0,188.6 1233.9,189.1 1234.9,189.2 1235.8,189.0 1236.9,187.4 1238.1,185.7 1239.1,189.3 1240.1,192.4 1241.2,190.4 1242.2,187.8 1243.3,186.5 1244.4,187.1 1245.4,188.2 1246.5,189.4 1247.4,189.1 1248.3,188.3 1249.1,188.6 1250.1,189.1 1251.0,190.2 1251.9,191.2 1252.8,191.6 1253.8,190.7 1254.7,188.7 1255.6,186.6 1256.5,186.3 1257.5,188.6 1258.5,194.1 1259.5,196.2 1260.7,191.8 1262.0,187.2 1263.0,187.9 1264.1,190.5 1265.1,192.1 1266.2,193.3 1267.3,189.2 1268.4,185.2 1269.5,188.0 1270.6,190.5 1271.6,190.1 1272.6,187.6 1273.6,186.8 1274.6,188.9 1275.7,193.3 1276.7,194.8 1277.7,194.0 1278.6,191.2 1279.5,188.4 1280.4,187.2 1281.5,188.6 1282.7,191.6 1283.8,193.2 1284.7,192.1 1285.6,190.5 1286.5,188.3 1287.3,187.0 1288.5,188.7 1289.7,190.7 1290.7,190.9 1291.8,189.4 1292.8,188.9 1293.8,189.0 1294.8,189.9 1295.7,191.4 1296.7,192.5 1297.8,191.1 1298.9,189.3 1299.9,187.6 1301.1,188.5 1302.2,191.0 1303.3,192.6 1304.5,188.2 1305.7,184.4 1306.7,186.1 1307.7,189.1 1308.6,192.3 1309.6,194.3 1310.8,190.8 1312.0,187.2 1313.2,189.0 1314.3,192.8 1315.5,195.0 1316.5,193.5 1317.6,190.6 1318.7,188.9 1319.7,190.3 1320.8,191.7 1321.9,188.2 1322.9,184.5 1323.9,185.1 1324.8,186.8 1325.7,188.4 1326.7,188.5 1327.8,187.7 1329.0,186.6 1330.2,186.2 1331.0,187.9 1331.9,189.8 1332.7,191.2 1333.7,190.8 1334.6,189.3 1335.5,187.7 1336.4,186.9 1337.4,188.5 1338.4,191.0 1339.5,192.9 1340.5,194.4 1341.5,193.3 1342.5,190.6 1343.4,189.4 1344.5,190.1 1345.5,191.4 1346.5,192.8 1347.6,193.7 1348.5,192.4 1349.4,189.1 1350.4,187.5 1351.5,190.1 1352.7,193.2 1353.8,192.2 1354.9,190.9 1355.9,190.4 1356.9,190.5 1357.9,192.1 1358.9,192.8 1359.9,193.7 1361.0,190.9 1362.1,186.4 1363.1,184.5 1364.2,186.5 1365.2,189.3 1366.2,187.8 1367.3,185.9 1368.4,187.0 1369.6,190.4 1370.7,192.0 1371.9,191.2 1373.0,188.8 1374.2,187.8 1375.1,188.3 1376.0,191.2 1377.0,193.4 1377.9,193.9 1379.0,192.6 1380.0,191.0 1381.1,189.4 1382.1,188.6 1383.0,189.7 1383.9,191.0 1384.8,193.1 1385.7,193.5 1386.7,192.1 1387.7,189.8 1388.6,186.5 1389.6,185.6 1390.6,186.2 1391.6,188.7 1392.6,190.7 1393.6,191.2 1394.7,190.1 1395.8,187.1 1396.8,185.6 1397.9,187.4 1399.1,189.4 1400.0,188.7 1400.9,186.8 1401.9,185.7 1402.9,186.7 1404.0,188.2 1405.0,189.0 1406.1,190.1 1407.2,187.3 1408.3,184.8 1409.4,186.9 1410.5,190.1 1411.6,192.3 1412.7,188.5 1413.9,185.4 1415.1,187.8 1416.3,191.2 1417.5,189.6 1418.7,187.9 1419.7,189.1 1420.7,190.7 1421.7,191.0 1422.7,189.7 1423.8,188.3 1424.8,186.0 1425.8,185.2 1427.0,188.6 1428.2,191.7 1429.2,191.0 1430.1,190.1 1431.1,188.7 1432.1,187.5 1433.1,188.0 1434.2,191.0 1435.3,192.7 1436.3,194.1 1437.3,189.9 1438.3,186.8 1439.4,187.8 1440.5,190.8 1441.6,191.8 1442.5,191.5 1443.4,188.8 1444.3,188.3 1445.4,189.1 1446.4,191.1 1447.5,194.0 1448.6,194.9 1449.7,192.2 1450.8,189.6 1451.8,190.0 1452.8,191.4 1453.7,193.3 1454.7,193.5 1455.6,193.6 1456.5,192.2 1457.4,191.6 1458.3,191.4 1459.4,193.0 1460.5,196.3 1461.6,197.5 1462.6,196.9 1463.5,193.7 1464.5,191.4 1465.4,190.1 1466.6,192.6 1467.8,195.0 1469.0,192.4 1470.1,189.1 1471.1,190.1 1472.1,193.0 1473.1,194.7 1474.0,193.7 1474.9,193.1 1475.8,190.9 1476.7,190.5 1477.6,191.6 1478.6,193.8 1479.6,196.6 1480.6,197.8 1481.5,195.8 1482.4,192.7 1483.3,188.6 1484.2,187.4 1485.1,188.8 1486.1,191.3 1487.0,194.2 1488.0,195.7 1488.9,194.5 1489.7,192.1 1490.6,191.1 1491.5,192.2 1492.5,194.6 1493.4,196.5 1494.6,192.4 1495.8,189.3 1496.7,190.3 1497.6,191.1 1498.5,192.4 1499.4,193.4 1500.5,191.0 1501.6,189.2 1502.7,191.8 1503.9,194.4 1505.0,194.4 1506.1,192.3 1507.2,192.0 1508.2,192.9 1509.1,193.6 1510.1,194.2 1511.1,192.5 1512.0,189.9 1513.0,188.0 1514.0,189.1 1514.9,191.2 1515.8,193.0 1516.8,189.5 1517.8,185.9 1518.9,188.5 1520.1,193.4 1521.3,195.8 1522.2,193.9 1523.1,191.4 1524.0,189.3 1524.9,190.4 1525.9,192.4 1526.8,193.5 1527.8,194.3 1528.9,192.0 1530.1,189.0 1531.1,189.5 1532.1,189.3 1533.2,190.0 1534.2,188.6 1535.3,186.7 1536.4,184.6 1537.4,184.2 1538.5,184.7 1539.5,187.5 1540.6,190.4 1541.6,191.1 1542.6,188.5 1543.7,186.3 1544.7,187.3 1545.8,189.3 1546.8,192.0 1547.8,193.4 1548.9,191.5 1550.0,188.6 1551.1,189.6 1552.2,193.2 1553.3,194.7 1554.3,194.6 1555.3,193.6 1556.3,192.5 1557.4,191.8 1558.3,192.3 1559.3,194.0 1560.3,195.3 1561.2,195.4 1562.5,193.1 1563.7,190.2 1564.8,191.2 1565.8,191.2 1566.9,190.7 1567.9,191.6 1569.0,190.9 1570.1,191.0 1571.0,191.6 1571.9,192.1 1572.8,193.8 1573.7,193.7 1574.7,192.8 1575.6,192.2 1576.6,190.7 1577.6,190.6 1578.5,191.6 1579.4,194.0 1580.4,195.3 1581.4,194.3 1582.5,192.3 1583.5,190.8 1584.5,193.7 1585.5,197.0 1586.6,196.2 1587.6,193.6 1588.7,191.3 1589.7,190.6 1590.6,191.6 1591.5,192.5 1592.4,193.8 1593.3,194.9 1594.3,193.7 1595.3,192.0 1596.4,190.7 1597.3,191.8 1598.3,195.2 1599.3,196.3 1600.3,194.4 1601.4,190.6 1602.5,188.5 1603.5,191.4 1604.5,195.1 1605.4,193.7 1606.3,191.5 1607.2,189.5 1608.1,188.8 1609.2,189.6 1610.2,190.7 1611.2,189.2 1612.3,187.9 1613.3,187.0 1614.6,189.6 1615.8,192.4 1617.0,190.9 1618.3,189.7 1619.3,190.8 1620.2,193.7 1621.2,195.2 1622.2,196.6 1623.5,193.9 1624.7,190.4 1625.6,190.6 1626.6,192.0 1627.5,192.3 1628.5,193.1 1629.5,193.4 1630.6,192.3 1631.6,192.3 1632.7,191.5 1633.7,193.8 1634.7,196.7 1635.7,194.4 1636.6,190.3 1637.6,187.9 1638.4,189.5 1639.3,193.5 1640.2,195.7 1641.3,195.1 1642.3,193.7 1643.4,191.3 1644.4,190.8 1645.5,190.9 1646.5,192.2 1647.5,193.9 1648.5,193.9 1649.4,192.1 1650.3,189.8 1651.2,188.3 1652.4,191.5 1653.6,194.9 1654.6,194.3 1655.6,192.0 1656.6,190.7 1657.6,189.8 1658.7,191.2 1659.7,193.6 1660.7,195.7 1661.7,196.6 1662.8,192.3 1663.9,187.9 1664.8,189.1 1665.7,190.9 1666.6,192.4 1667.7,190.1 1668.9,187.0 1670.1,189.5 1671.2,193.9 1672.4,196.3 1673.6,192.8 1674.8,188.9 1676.0,190.5 1677.1,193.9 1678.3,195.7 1679.3,194.5 1680.2,193.1 1681.2,192.1 1682.1,192.6 1682.9,193.5 1683.8,194.0 1684.9,191.9 1685.9,190.7 1687.0,192.1 1688.1,194.3 1689.1,195.6 1690.2,195.2 1691.3,194.0 1692.3,193.2 1693.4,192.3 1694.4,192.7 1695.5,194.8 1696.5,197.3 1697.5,197.5 1698.6,196.1 1699.7,192.5 1700.8,191.1 1701.8,192.4 1702.9,194.7 1703.9,195.1 1704.8,194.1 1705.7,192.3 1706.6,189.2 1707.5,188.6 1708.6,191.2 1709.7,192.8 1710.7,191.5 1711.7,188.7 1712.7,187.8 1713.7,188.9 1714.8,190.1 1715.8,190.7 1718.8,196.0 1720.2,212.0 1721.6,222.7 1723.0,219.5 1724.2,213.0 1725.4,219.8 1726.5,218.6 1727.5,217.1 1728.6,214.7 1729.7,214.0 1730.6,213.9 1731.5,215.5 1732.4,216.7 1733.3,217.4 1734.3,217.4 1735.3,216.4 1736.3,216.3 1737.3,215.9 1738.4,217.7 1739.6,220.3 1740.7,222.2 1742.0,218.1 1743.2,214.8 1744.1,215.6 1745.1,217.0 1746.0,218.2 1746.9,219.3 1747.9,216.9 1748.8,214.0 1749.7,211.6 1750.7,212.5 1751.7,214.1 1752.7,215.9 1753.7,217.0 1754.7,216.8 1755.7,214.8 1756.7,213.2 1757.6,212.3 1758.7,215.8 1759.7,219.7 1762.6,214.5 1763.6,208.6 1764.6,203.0 1766.0,200.2 1766.8,201.8 1767.6,203.5 1768.8,210.5 1770.0,218.0 1771.0,220.9 1771.9,223.7 1772.8,222.6 1773.6,220.8 1774.5,219.5 1775.8,220.1 1777.0,220.8 1778.0,219.8 1779.0,218.0 1780.0,217.0 1781.0,217.1 1782.0,216.3 1783.0,216.2 1783.9,215.3 1784.8,212.4 1785.6,210.1 1786.5,209.0 1787.6,208.0 1788.7,206.9 1789.8,205.8 1791.0,207.5 1792.2,209.5 1793.1,211.0 1794.1,213.4 1795.0,214.5 1796.2,214.8 1797.5,215.2 1798.8,216.7 1800.0,217.5 1801.0,217.8 1802.0,218.2 1802.8,219.3 1803.6,220.0 1804.8,214.0 1805.9,192.0 1806.9,186.2 1807.9,180.2 1809.0,183.1 1810.0,186.0 1811.2,192.2 1812.4,199.0 1813.4,202.1 1814.4,205.3 1815.5,199.5 1816.6,194.0 1817.6,190.0 1818.6,186.0 1819.4,184.8 1820.2,183.0 1821.3,186.1 1822.4,189.5 1823.5,193.9 1824.6,198.0 1825.6,204.3 1826.6,210.4 1828.0,200.0 1829.2,191.2 1830.1,190.8 1830.9,190.4 1831.8,190.2 1833.0,190.5 1834.3,191.4 1835.0,195.5 1835.8,199.0 1836.6,203.0 1837.4,207.3 1838.4,204.1 1839.4,201.0 1840.5,198.1 1841.6,195.5 1842.5,194.7 1843.5,193.5 1844.8,194.6" fill="none" stroke="#f0f0f4" stroke-width="1.5" stroke-linejoin="round"/>
<line x1="891.3" y1="86.1" x2="891.3" y2="277.3" stroke="#d61f1f" stroke-width="1.3"/>
<line x1="1339.3" y1="86.1" x2="1339.3" y2="277.3" stroke="#f4f45a" stroke-width="1.2"/>
<text x="817.5" y="90.7" font-size="16.2" fill="#fff" text-anchor="end" letter-spacing="0.12">40.0</text>
<text x="817.5" y="129.1" font-size="16.2" fill="#fff" text-anchor="end" letter-spacing="0.12">20.0</text>
<text x="817.5" y="167.4" font-size="16.2" fill="#fff" text-anchor="end" letter-spacing="0.12">0.0</text>
<text x="817.5" y="205.7" font-size="16.2" fill="#fff" text-anchor="end" letter-spacing="0.12">-20.0</text>
<text x="817.5" y="244.1" font-size="16.2" fill="#fff" text-anchor="end" letter-spacing="0.12">-40.0</text>
<text x="817.5" y="282.4" font-size="16.2" fill="#fff" text-anchor="end" letter-spacing="0.12">-60.0</text>
<text x="881.0" y="297" font-size="16.2" fill="#fff" text-anchor="middle">216</text>
<text x="979.7" y="297" font-size="16.2" fill="#fff" text-anchor="middle">216.2</text>
<text x="1078.5" y="297" font-size="16.2" fill="#fff" text-anchor="middle">216.4</text>
<text x="1177.2" y="297" font-size="16.2" fill="#fff" text-anchor="middle">216.6</text>
<text x="1276.0" y="297" font-size="16.2" fill="#fff" text-anchor="middle">216.8</text>
<text x="1374.7" y="297" font-size="16.2" fill="#fff" text-anchor="middle">217</text>
<text x="1473.4" y="297" font-size="16.2" fill="#fff" text-anchor="middle">217.2</text>
<text x="1572.2" y="297" font-size="16.2" fill="#fff" text-anchor="middle">217.4</text>
<text x="1670.9" y="297" font-size="16.2" fill="#fff" text-anchor="middle">217.6</text>
<text x="1769.7" y="297" font-size="16.2" fill="#fff" text-anchor="middle">217.8</text>
<text x="1338.5" y="324.6" font-size="19.8" fill="#fff" text-anchor="middle">Frequency (MHz)</text>
<text transform="translate(751.1,182.1) rotate(-90) scale(0.877,1)" font-size="21" fill="#fff" text-anchor="middle">Magnitude (dB)</text>
</svg>
<div style="left:0px;top:341px;width:1912px;height:6px;background:#7f7f7f;"></div>
<div style="left:0px;top:347px;width:1912px;height:49px;background:#252525;"></div>
<div style="left:120px;top:347px;width:499px;height:49px;background:#333333;"></div>
<div style="left:119px;top:347px;width:1.2px;height:49px;background:#d9b9bb;"></div>
<div style="left:120.2px;top:347px;width:125.8px;height:49px;background:#aa1515;"></div>
<div style="left:618.75px;top:347px;width:3.7px;height:49.6px;background:#ffffff;"></div>
<div style="left:31.4px;top:360px;width:74.2px;height:26.9px;box-sizing:border-box;border:1.1px solid #959595;border-radius:3.5px;"></div>
<span class="t" id="t10" style="left:34.2px;top:366.13px;font-size:15.3px;color:#fff;">11A</span>
<svg style="left:77.6px;top:368.6px" width="16" height="10" viewBox="0 0 16 10"><path d="M1.1 1.4 H14.6 L7.85 8.7 Z" fill="#fff"/></svg>
<span class="t" id="t11" style="left:138.6px;top:364.72px;font-size:19px;color:#f26a6a;letter-spacing:-0.29px;">EId: 31F3</span>
<span class="t" id="t12" style="left:243px;top:364.72px;font-size:19px;color:#eaea3a;">Polskie Radio</span>
<span class="t" id="t13" style="left:384.4px;top:364.72px;font-size:19px;color:#fff;letter-spacing:0.25px;">2020-06-13&nbsp; 06:27:18 Z</span>
<div style="left:635px;top:360px;width:31px;height:27.2px;box-sizing:border-box;border:1.1px solid #959595;border-radius:3.5px;"></div>
<svg style="left:642px;top:368.6px" width="16" height="10" viewBox="0 0 16 10"><path d="M1.1 1.2 H14.3 L7.7 8.7 Z" fill="#fff"/></svg>
<div style="left:695.6px;top:359.8px;width:28.8px;height:28.8px;border-radius:50%;background:#1e64a0;"></div>
<div style="left:703.5px;top:367.9px;width:13px;height:13px;border-radius:50%;background:#ff0505;"></div>
<div style="left:739.3px;top:359.8px;width:28.8px;height:28.8px;border-radius:50%;background:#1e466e;"></div>
<div style="left:748.1px;top:368.1px;width:10.9px;height:12.9px;background:#141414;"></div>
<div style="left:1839.2px;top:358.2px;width:80px;height:27px;box-sizing:border-box;border:1.1px solid #959595;border-radius:3.5px;"></div>
<span class="t" id="t14" style="left:1841.2px;top:364.23px;font-size:15.3px;color:#fff;letter-spacing:-0.75px;">DAB</span>
<svg style="left:1885.4px;top:366.6px" width="16" height="10" viewBox="0 0 16 10"><path d="M1.1 1.4 H14.9 L8 8.4 Z" fill="#fff"/></svg>
<div style="left:0px;top:396px;width:1912px;height:1.2px;background:#c6d2e0;"></div>
<div style="left:0px;top:397px;width:919px;height:580px;background:#0f2c4c;"></div>
<div style="left:0px;top:440px;width:216px;height:537px;background:#1b5886;"></div>
<div style="left:0;top:397px;width:216px;height:43px;overflow:hidden;">
<span class="t" style="left:6.2px;top:10.88px;font-size:24px;color:#ffff1e;letter-spacing:1.02px;">No Service Select</span>
</div>
<div style="left:216px;top:397px;width:6.4px;height:580px;background:#efefef;"></div>
<span class="t" id="t15" style="left:6.6px;top:449.32px;font-size:19px;color:#fff;letter-spacing:0.92px;">Chopin</span>
<span class="t" id="t16" style="left:6.6px;top:480.89px;font-size:19px;color:#fff;letter-spacing:0.13px;">Polskie Radio 24</span>
<span class="t" id="t17" style="left:6.6px;top:512.46px;font-size:19px;color:#fff;letter-spacing:-0.27px;">PR Czwórka</span>
<span class="t" id="t18" style="left:6.6px;top:544.03px;font-size:19px;color:#fff;">PR Dwójka</span>
<span class="t" id="t19" style="left:6.6px;top:575.60px;font-size:19px;color:#fff;letter-spacing:0.12px;">PR Dzieciom</span>
<span class="t" id="t20" style="left:6.6px;top:607.17px;font-size:19px;color:#fff;letter-spacing:-0.39px;">PR Jedynka</span>
<span class="t" id="t21" style="left:6.6px;top:638.74px;font-size:19px;color:#fff;letter-spacing:-0.36px;">PR Trójka</span>
<span class="t" id="t22" style="left:6.6px;top:670.31px;font-size:19px;color:#fff;letter-spacing:0.32px;">Radio Poland</span>
<span class="t" id="t23" style="left:6.6px;top:701.88px;font-size:19px;color:#fff;letter-spacing:-0.06px;">Radio Szczecin</span>
<span class="t" id="t24" style="left:6.6px;top:733.45px;font-size:19px;color:#fff;letter-spacing:-0.33px;">Szczecin Extra</span>
<div style="left:222.4px;top:440px;width:225.6px;height:537px;background:#1b5886;"></div>
<span class="t" id="t25" style="left:227.6px;top:407.88px;font-size:24px;color:#fff;letter-spacing:1.40px;">Service Quality</span>
<div style="left:448.8px;top:397px;width:1px;height:580px;background:#0c2648;"></div>
<div style="left:449.8px;top:397px;width:3.4px;height:580px;background:#b4c0d4;"></div>
<span class="t" id="t26" style="left:234.4px;top:461.20px;font-size:17.6px;color:#fff;letter-spacing:-0.79px;">SNR (dB)</span>
<div style="left:384.5px;top:453.6px;width:50.6px;height:30.9px;background:#808080;"></div>
<div style="left:384.5px;top:453.6px;width:13.5px;height:30.9px;background:#ff0000;"></div>
<span class="t" style="left:410px;transform:translateX(-50%);top:462.47px;font-size:14.6px;color:#f4f4f4;">8.8</span>
<span class="t" id="t27" style="left:234.4px;top:500.00px;font-size:17.6px;color:#fff;letter-spacing:-0.64px;">FIC (ok %)</span>
<div style="left:384.5px;top:492.4px;width:50.6px;height:30.9px;background:#808080;"></div>
<div style="left:384.5px;top:492.4px;width:50.6px;height:30.9px;background:#008000;"></div>
<span class="t" style="left:410px;transform:translateX(-50%);top:501.27px;font-size:14.6px;color:#f4f4f4;">100</span>
<span class="t" id="t28" style="left:234.4px;top:538.70px;font-size:17.6px;color:#fff;letter-spacing:-0.81px;">RS (ok %)</span>
<div style="left:384.5px;top:531.1px;width:50.6px;height:30.9px;background:#808080;"></div>
<span class="t" id="t29" style="left:234.4px;top:576.50px;font-size:17.6px;color:#fff;">Null Symbol</span>
<div style="left:384.5px;top:568.9px;width:50.6px;height:30.9px;background:#808080;"></div>
<div style="left:384.5px;top:568.9px;width:50.6px;height:30.9px;background:#008000;"></div>
<span class="t" id="t30" style="left:234.4px;top:614.90px;font-size:17.6px;color:#fff;letter-spacing:-0.24px;">SymbolTime (ms)</span>
<div style="left:384.5px;top:607.3px;width:50.6px;height:30.9px;background:#808080;"></div>
<div style="left:384.5px;top:607.3px;width:7.5px;height:30.9px;background:#008000;"></div>
<span class="t" style="left:410px;transform:translateX(-50%);top:616.17px;font-size:14.6px;color:#f4f4f4;">0.21</span>
<span class="t" id="t31" style="left:234.4px;top:653.60px;font-size:17.6px;color:#fff;letter-spacing:-0.41px;">FrameTime (ms)</span>
<div style="left:384.5px;top:646.0px;width:50.6px;height:30.9px;background:#808080;"></div>
<div style="left:384.5px;top:646.0px;width:32.3px;height:30.9px;background:#008000;"></div>
<span class="t" style="left:410px;transform:translateX(-50%);top:654.87px;font-size:14.6px;color:#f4f4f4;">96.1</span>
<div style="left:453.2px;top:440px;width:465.4px;height:537px;background:#1b5886;"></div>
<div class="tab" style="left:463px;top:406.2px;width:74.0px;height:34px;"></div>
<span class="t" style="left:479px;top:415.90px;font-size:21.5px;color:#d2d2d2;letter-spacing:-1.1px;">Sync</span>
<div class="tab" style="left:538.4px;top:406.2px;width:54.0px;height:34.4px;background:#1b5886;border-color:#2d6a98;"></div>
<span class="t" style="left:553.7px;top:415.90px;font-size:21.5px;color:#fff;letter-spacing:-0.7px;">TII</span>
<div class="tab" style="left:593px;top:406.2px;width:87.0px;height:34px;"></div>
<span class="t" style="left:608.6px;top:415.90px;font-size:21.5px;color:#d2d2d2;letter-spacing:0px;">Audio</span>
<div class="tab" style="left:681.2px;top:406.2px;width:71.0px;height:34px;"></div>
<span class="t" style="left:697px;top:415.90px;font-size:21.5px;color:#d2d2d2;letter-spacing:-1.5px;">AAC</span>
<div class="tab" style="left:753.6px;top:406.2px;width:107.4px;height:34px;"></div>
<span class="t" style="left:769.6px;top:415.90px;font-size:21.5px;color:#d2d2d2;letter-spacing:0px;">Options</span>
<div style="left:496.6px;top:453.5px;width:11px;height:11px;border-radius:50%;background:#ff0505;"></div>
<div style="left:533px;top:453.4px;width:11px;height:11.2px;background:#0e2c4c;"></div>
<div style="left:471px;top:476.7px;width:310px;height:1.2px;background:#9fb6cb;"></div>
<div style="left:793.2px;top:441.5px;width:1.1px;height:36.5px;background:#3f7aa6;"></div>
<span class="t" id="t32" style="left:799.4px;top:464.65px;font-size:17.5px;color:#fff;">Threshold</span>
<span class="t" id="t33" style="left:471px;top:502.95px;font-size:17.5px;color:#fff;letter-spacing:0.63px;">Pattern</span>
<span class="t" id="t34" style="left:555.2px;top:502.95px;font-size:17.5px;color:#fff;letter-spacing:1.18px;">MainId</span>
<span class="t" id="t35" style="left:637.6px;top:502.95px;font-size:17.5px;color:#fff;letter-spacing:0.70px;">SubId</span>
<span class="t" id="t36" style="left:709.6px;top:502.95px;font-size:17.5px;color:#fff;letter-spacing:0.81px;">Strength</span>
<div style="left:471px;top:521.9px;width:310px;height:1.2px;background:#9fb6cb;"></div>
<span class="t" id="t37" style="left:473.2px;top:540.20px;font-size:17px;color:#fff;">0xf</span>
<span class="t" style="left:557.4px;top:540.20px;font-size:17px;color:#fff;">0</span>
<span class="t" style="left:640.2px;top:540.20px;font-size:17px;color:#fff;">1</span>
<span class="t" id="t38" style="left:712.4px;top:540.20px;font-size:17px;color:#fff;letter-spacing:-0.33px;">0.94</span>
<div style="left:833.2px;top:502.5px;width:3.1px;height:136px;background:linear-gradient(90deg,#9db5cb,#f0f4f8 50%,#9db5cb);border-radius:1.5px;"></div>
<div class="knob" style="left:826.9px;top:636.1px;background:radial-gradient(circle at 22% 50%,#e6e6e6 0%,#bcbcbc 40%,#868686 80%,#6c6c6c 100%);"></div>
<span class="t" style="left:833.2px;transform:translateX(-50%);top:663.59px;font-size:16.8px;color:#fff;">0.02</span>
<div style="left:918.8px;top:397px;width:6.6px;height:580px;background:#f2f2f2;"></div>
<div style="left:925.4px;top:397.2px;width:987px;height:25.6px;background:#0f2c4c;"></div>
<span class="t" style="left:1422.8px;transform:translateX(-50%);top:400.81px;font-size:18px;color:#fff;">Channel Impulse Response (CIR)</span>
<svg style="left:1860px;top:397px" width="52" height="26" viewBox="0 0 52 26">
<path d="M16 6 H31.6 L23.8 19 Z" fill="none" stroke="#dfe9f5" stroke-width="1.1"/>
<path d="M41 5.6 L54 19.4 M54 5.6 L41 19.4" stroke="#e0662a" stroke-width="3.7" fill="none"/>
</svg>
<div style="left:925.4px;top:422.8px;width:987px;height:273.2px;background:#000;"></div>
<div class="radio" style="left:938px;top:437.2px;"></div>
<span class="t" style="left:959.2px;top:438.57px;font-size:14.6px;color:#fff;letter-spacing:-0.45px;">Freeze</span>
<div class="radio" style="left:1027px;top:437.2px;"></div>
<span class="t" style="left:1048.4px;top:438.57px;font-size:14.6px;color:#fff;letter-spacing:0.1px;">Gradient</span>
<span class="t" style="left:943.8px;top:489.87px;font-size:14.6px;color:#fff;letter-spacing:0.12px;">Smoothing Level</span>
<div style="left:946.1px;top:512.2px;width:1.2px;height:5px;background:#c8c8c8;"></div>
<div style="left:962.4px;top:513.4px;width:1.2px;height:3.8px;background:#8e8e8e;"></div>
<div style="left:978.6px;top:513.4px;width:1.2px;height:3.8px;background:#8e8e8e;"></div>
<div style="left:994.9px;top:513.4px;width:1.2px;height:3.8px;background:#8e8e8e;"></div>
<div style="left:1011.1px;top:513.4px;width:1.2px;height:3.8px;background:#8e8e8e;"></div>
<div style="left:1027.4px;top:513.4px;width:1.2px;height:3.8px;background:#8e8e8e;"></div>
<div style="left:1043.7px;top:513.4px;width:1.2px;height:3.8px;background:#8e8e8e;"></div>
<div style="left:1059.9px;top:513.4px;width:1.2px;height:3.8px;background:#8e8e8e;"></div>
<div style="left:1076.2px;top:513.4px;width:1.2px;height:3.8px;background:#8e8e8e;"></div>
<div style="left:1092.4px;top:513.4px;width:1.2px;height:3.8px;background:#8e8e8e;"></div>
<div style="left:1108.7px;top:512.2px;width:1.2px;height:5px;background:#c8c8c8;"></div>
<div class="track" style="left:938px;top:524.4px;width:172.2px;"></div>
<div class="knob" style="left:1019.8px;top:518px;"></div>
<span class="t" style="left:944.2px;top:557.47px;font-size:15px;color:#fff;">Zoom X</span>
<div class="track" style="left:943px;top:586.7px;width:167.2px;"></div>
<div class="knob" style="left:938.6px;top:580.2px;"></div>
<span class="t" style="left:944.2px;top:619.47px;font-size:15px;color:#fff;">Zoom Y</span>
<div class="track" style="left:943px;top:649.3px;width:167.2px;"></div>
<div class="knob" style="left:938.6px;top:642.8px;"></div>
<div style="left:925.4px;top:670px;width:200px;height:26.1px;overflow:hidden;">
<span class="t" style="left:18.4px;top:12.57px;font-size:14.6px;color:#fff;letter-spacing:0.25px;">x-Axis</span>
</div>
<div style="left:1117.6px;top:424.4px;width:6px;height:206px;background:#a8a8a8;border-radius:3px;"></div>
<div style="left:1131.2px;top:422.8px;width:1px;height:273.2px;background:#262626;"></div>
<svg style="left:1132px;top:423px" width="780" height="273" viewBox="1132 423 780 273">
<rect x="1326.2" y="443.0" width="74.3" height="195.2" fill="#444444"/>
<line x1="1276.5" y1="443.0" x2="1276.5" y2="638.2" stroke="#a4a4a4" stroke-width="1"/>
<line x1="1317.5" y1="443.0" x2="1317.5" y2="638.2" stroke="#a4a4a4" stroke-width="1"/>
<line x1="1359.5" y1="443.0" x2="1359.5" y2="638.2" stroke="#a4a4a4" stroke-width="1"/>
<line x1="1400.5" y1="443.0" x2="1400.5" y2="638.2" stroke="#a4a4a4" stroke-width="1"/>
<line x1="1441.5" y1="443.0" x2="1441.5" y2="638.2" stroke="#a4a4a4" stroke-width="1"/>
<line x1="1483.5" y1="443.0" x2="1483.5" y2="638.2" stroke="#a4a4a4" stroke-width="1"/>
<line x1="1524.5" y1="443.0" x2="1524.5" y2="638.2" stroke="#a4a4a4" stroke-width="1"/>
<line x1="1566.5" y1="443.0" x2="1566.5" y2="638.2" stroke="#a4a4a4" stroke-width="1"/>
<line x1="1607.5" y1="443.0" x2="1607.5" y2="638.2" stroke="#a4a4a4" stroke-width="1"/>
<line x1="1648.5" y1="443.0" x2="1648.5" y2="638.2" stroke="#a4a4a4" stroke-width="1"/>
<line x1="1690.5" y1="443.0" x2="1690.5" y2="638.2" stroke="#a4a4a4" stroke-width="1"/>
<line x1="1731.5" y1="443.0" x2="1731.5" y2="638.2" stroke="#a4a4a4" stroke-width="1"/>
<line x1="1773.5" y1="443.0" x2="1773.5" y2="638.2" stroke="#a4a4a4" stroke-width="1"/>
<line x1="1814.5" y1="443.0" x2="1814.5" y2="638.2" stroke="#a4a4a4" stroke-width="1"/>
<line x1="1856.5" y1="443.0" x2="1856.5" y2="638.2" stroke="#a4a4a4" stroke-width="1"/>
<line x1="1247.4" y1="482.5" x2="1867.4" y2="482.5" stroke="#a4a4a4" stroke-width="1"/>
<line x1="1247.4" y1="521.5" x2="1867.4" y2="521.5" stroke="#a4a4a4" stroke-width="1"/>
<line x1="1247.4" y1="560.5" x2="1867.4" y2="560.5" stroke="#a4a4a4" stroke-width="1"/>
<line x1="1247.4" y1="599.5" x2="1867.4" y2="599.5" stroke="#a4a4a4" stroke-width="1"/>
<rect x="1247.4" y="443.0" width="620.0" height="195.2" fill="none" stroke="#a8a8a8" stroke-width="1.6"/>
<line x1="1400.5" y1="443.0" x2="1400.5" y2="639.2" stroke="#e8e84a" stroke-width="1" stroke-dasharray="1.2 1.2"/>
<polyline points="1248.6,580.9 1250.0,575.0 1251.4,562.1 1252.8,556.8 1254.0,558.9 1255.2,563.4 1256.4,568.9 1257.6,570.6 1259.0,564.8 1260.4,559.0 1261.4,569.3 1262.4,578.7 1263.7,571.8 1264.9,564.4 1266.2,569.6 1267.5,578.4 1268.8,583.3 1270.1,573.9 1271.4,564.2 1272.8,575.3 1274.3,585.8 1275.5,583.8 1276.7,577.1 1277.9,571.8 1279.1,568.8 1280.3,570.8 1281.4,573.9 1282.6,577.7 1283.8,578.5 1284.9,576.7 1286.0,573.7 1287.0,577.1 1288.0,580.5 1289.1,577.7 1290.3,571.6 1291.4,569.3 1292.8,573.2 1294.2,580.3 1295.5,583.1 1296.7,582.7 1297.8,582.1 1298.9,581.2 1300.1,580.5 1301.6,581.5 1303.2,581.9 1304.4,580.4 1305.6,578.9 1306.8,576.2 1308.0,575.1 1309.2,576.7 1310.4,579.8 1311.6,583.4 1312.8,584.7 1314.3,582.7 1315.7,577.7 1317.2,575.1 1318.3,578.0 1319.4,583.0 1320.4,589.3 1321.5,592.2 1322.8,585.7 1324.1,573.2 1325.4,566.6 1326.6,567.9 1327.8,572.6 1329.0,576.6 1330.2,578.2 1331.3,573.8 1332.4,570.7 1333.6,572.7 1334.9,577.5 1336.1,582.3 1337.4,585.0 1338.4,581.2 1339.5,575.0 1340.6,572.0 1341.7,571.9 1342.8,573.0 1344.0,573.8 1345.1,574.9 1346.1,571.6 1347.2,568.4 1348.4,574.6 1349.6,581.1 1350.7,571.8 1351.9,562.2 1353.0,564.8 1354.1,570.5 1355.3,577.6 1356.4,579.6 1357.6,577.3 1358.9,573.9 1360.1,569.7 1361.3,568.4 1362.7,570.5 1364.1,574.5 1365.5,577.3 1366.6,574.2 1367.6,566.4 1368.7,563.1 1370.0,565.1 1371.3,571.3 1372.5,573.9 1374.0,570.7 1375.4,566.1 1376.9,563.4 1378.3,567.8 1379.8,577.3 1381.2,581.7 1382.8,572.8 1384.3,562.5 1385.5,566.5 1386.6,573.0 1387.8,576.6 1388.2,575.5 1389.0,572.0 1392.5,561.0 1395.6,552.0 1398.8,540.0 1400.3,520.0 1401.4,497.5 1402.6,520.0 1403.8,540.0 1405.0,550.0 1406.9,558.8 1408.2,551.0 1409.4,548.1 1410.4,558.0 1411.2,567.5 1413.0,571.0 1414.2,579.2 1415.8,574.2 1417.3,568.1 1418.5,570.5 1419.8,575.5 1421.0,582.2 1422.2,584.2 1423.4,582.3 1424.6,578.1 1425.7,573.9 1426.9,571.8 1428.1,578.1 1429.3,584.0 1430.4,580.7 1431.4,574.6 1432.4,570.7 1433.5,574.2 1434.5,581.5 1435.6,585.3 1436.8,581.8 1438.1,572.8 1439.4,569.2 1440.8,580.7 1442.3,592.7 1443.8,583.0 1445.2,572.3 1446.6,578.6 1448.1,586.2 1449.1,576.3 1450.1,565.5 1451.5,572.2 1452.8,578.3 1454.1,576.7 1455.3,572.9 1456.6,570.0 1457.8,568.1 1459.1,573.0 1460.3,580.7 1461.6,585.6 1463.0,582.0 1464.5,575.1 1465.9,571.5 1467.1,574.7 1468.3,580.9 1469.5,584.3 1470.9,581.1 1472.3,576.3 1473.7,573.4 1474.0,575.0 1475.0,572.0 1476.2,578.8 1477.6,556.0 1479.0,534.0 1480.6,553.0 1482.5,567.5 1484.0,565.0 1485.2,586.6 1486.3,585.4 1487.4,580.3 1488.5,576.1 1489.7,573.6 1490.9,574.1 1492.1,576.7 1493.4,579.3 1494.6,581.0 1495.7,573.2 1496.7,566.2 1498.1,568.1 1499.5,572.4 1500.9,574.6 1502.1,574.1 1503.3,572.6 1504.4,570.0 1505.6,569.9 1506.9,572.3 1508.2,577.4 1509.5,579.8 1510.5,577.5 1511.6,572.9 1512.6,571.4 1513.8,572.8 1515.0,575.4 1516.1,578.9 1517.3,579.8 1518.7,572.1 1520.2,564.3 1521.3,572.5 1522.4,579.5 1523.7,575.4 1525.0,564.6 1526.3,560.4 1527.7,568.1 1529.1,575.0 1530.5,572.9 1531.9,567.6 1533.3,565.5 1534.7,567.0 1536.1,571.5 1537.5,573.5 1538.9,573.2 1540.2,573.5 1541.5,573.0 1542.8,575.5 1544.0,578.6 1545.3,580.7 1546.4,578.3 1547.6,574.5 1548.7,572.4 1549.8,577.2 1550.9,581.5 1552.2,578.5 1553.6,571.4 1554.9,567.9 1556.0,569.5 1557.2,574.1 1558.3,579.4 1559.4,580.8 1560.9,575.7 1562.4,570.5 1563.5,572.7 1564.6,578.7 1565.6,581.6 1566.9,578.3 1568.2,573.0 1569.5,569.9 1570.8,572.0 1572.1,577.9 1573.3,580.9 1574.4,577.0 1575.5,570.6 1576.5,567.3 1577.7,573.3 1578.8,583.4 1580.0,588.7 1581.1,585.4 1582.3,578.7 1583.5,570.0 1584.6,567.5 1585.9,570.7 1587.1,574.2 1588.1,573.6 1589.2,570.2 1590.2,569.8 1591.5,573.6 1592.7,576.6 1593.9,576.0 1595.0,574.6 1596.2,574.8 1597.5,577.4 1598.9,583.5 1600.2,586.5 1601.4,584.9 1602.7,581.7 1603.9,577.7 1605.1,576.9 1606.5,578.5 1607.9,583.4 1609.3,584.7 1610.3,579.7 1611.3,574.8 1612.9,579.1 1614.4,583.4 1615.9,578.4 1617.3,574.5 1618.6,575.9 1620.0,580.4 1621.3,581.6 1622.4,579.2 1623.5,573.7 1624.6,571.1 1625.7,571.5 1626.7,574.1 1627.8,575.4 1629.1,574.8 1630.3,572.0 1631.5,570.0 1632.8,568.9 1634.0,570.7 1635.1,573.4 1636.3,576.5 1637.5,577.6 1638.6,572.0 1639.6,567.8 1641.0,572.8 1642.4,579.1 1643.5,579.2 1644.6,578.5 1645.6,581.7 1646.7,589.0 1647.8,591.7 1648.9,579.6 1650.1,566.5 1651.4,570.6 1652.7,573.5 1653.9,570.8 1655.0,566.6 1656.2,563.4 1657.4,565.4 1658.6,569.4 1659.8,572.3 1660.9,574.4 1662.1,573.8 1663.2,570.9 1664.3,569.3 1665.4,567.6 1666.9,572.0 1668.3,578.3 1669.7,582.4 1670.9,578.0 1672.1,573.7 1673.4,576.6 1674.6,583.4 1675.9,586.6 1676.9,579.0 1678.0,572.0 1679.1,574.8 1680.2,579.2 1681.3,582.4 1682.5,579.4 1683.7,574.8 1684.9,572.4 1686.0,574.8 1687.1,581.3 1688.3,584.5 1689.5,583.2 1690.7,578.4 1691.9,572.8 1693.1,571.2 1694.2,572.0 1695.2,576.0 1696.3,577.0 1697.7,573.5 1699.1,568.7 1700.3,570.4 1701.5,573.0 1702.7,575.2 1704.3,571.6 1705.8,568.9 1706.9,570.9 1708.0,573.7 1709.1,574.5 1710.1,566.2 1711.1,559.1 1712.3,561.3 1713.5,566.7 1714.7,569.4 1715.8,569.5 1716.9,570.9 1718.1,571.0 1719.2,571.7 1720.4,574.5 1721.6,575.9 1722.8,577.3 1723.9,574.9 1725.0,570.5 1726.1,567.4 1727.4,568.2 1728.6,568.5 1729.9,569.6 1731.0,570.4 1732.1,573.8 1733.2,574.9 1734.3,577.9 1735.5,584.2 1736.6,587.5 1737.9,579.1 1739.3,570.7 1740.7,573.6 1742.1,579.6 1743.5,581.7 1744.9,577.3 1746.3,573.6 1747.3,575.9 1748.4,579.7 1749.5,582.1 1750.6,581.0 1751.8,578.8 1752.9,577.3 1754.1,577.4 1755.3,579.4 1756.5,581.3 1757.6,581.7 1759.1,574.2 1760.6,568.2 1761.6,569.4 1762.7,570.4 1763.7,571.3 1765.0,569.8 1766.2,566.9 1767.5,565.2 1768.5,569.5 1769.6,576.4 1770.6,581.0 1771.7,578.5 1772.8,572.8 1773.8,571.0 1775.2,574.1 1776.5,580.6 1777.9,584.1 1779.4,575.1 1780.9,567.5 1782.1,570.3 1783.2,573.7 1784.4,572.3 1785.7,570.0 1786.9,568.5 1788.3,576.4 1789.7,583.1 1791.1,579.4 1792.4,572.5 1793.7,568.9 1795.2,572.2 1796.6,578.4 1798.0,580.8 1799.1,577.8 1800.3,570.5 1801.5,566.1 1802.6,568.2 1803.6,572.9 1804.7,575.7 1806.0,569.3 1807.2,561.6 1808.3,563.0 1809.3,567.4 1810.4,569.5 1811.6,567.3 1812.8,562.1 1814.0,559.6 1815.5,565.4 1817.0,571.6 1818.1,571.0 1819.3,567.4 1820.5,565.0 1821.7,563.7 1822.8,573.5 1823.8,582.3 1825.0,580.0 1826.2,576.0 1827.3,571.8 1828.5,570.1 1829.7,571.0 1830.8,572.7 1832.0,575.2 1833.2,576.2 1834.5,574.7 1835.7,573.1 1837.0,572.8 1838.2,574.6 1839.5,578.3 1840.7,580.8 1842.0,572.8 1843.3,563.6 1844.4,569.1 1845.5,575.4 1846.7,573.1 1847.9,569.0 1849.1,564.2 1850.3,561.9 1851.7,572.1 1853.0,583.0 1854.2,581.1 1855.3,576.3 1856.4,573.9 1857.7,578.7 1858.9,583.9 1860.3,580.0 1861.7,571.3 1863.2,567.6 1864.7,570.7 1866.2,574.5" fill="none" stroke="#f2f2f2" stroke-width="1.5" stroke-linejoin="round"/>
<circle cx="1401.3" cy="492.5" r="4.7" fill="#fff01a"/>
<circle cx="1479" cy="528.9" r="4.7" fill="#e81313"/>
<text x="1237" y="447.7" font-size="16.4" fill="#fff" text-anchor="end" letter-spacing="0.12">-10.0</text>
<text x="1237" y="486.7" font-size="16.4" fill="#fff" text-anchor="end" letter-spacing="0.12">-20.0</text>
<text x="1237" y="525.8" font-size="16.4" fill="#fff" text-anchor="end" letter-spacing="0.12">-30.0</text>
<text x="1237" y="564.8" font-size="16.4" fill="#fff" text-anchor="end" letter-spacing="0.12">-40.0</text>
<text x="1237" y="603.9" font-size="16.4" fill="#fff" text-anchor="end" letter-spacing="0.12">-50.0</text>
<text x="1237" y="642.9" font-size="16.4" fill="#fff" text-anchor="end" letter-spacing="0.12">-60.0</text>
<text x="1275.8" y="655.8" font-size="12.8" fill="#fff" text-anchor="middle">-60</text>
<text x="1317.2" y="655.8" font-size="12.8" fill="#fff" text-anchor="middle">-40</text>
<text x="1358.6" y="655.8" font-size="12.8" fill="#fff" text-anchor="middle">-20</text>
<text x="1400.0" y="655.8" font-size="12.8" fill="#fff" text-anchor="middle">0</text>
<text x="1441.4" y="655.8" font-size="12.8" fill="#fff" text-anchor="middle">20</text>
<text x="1482.8" y="655.8" font-size="12.8" fill="#fff" text-anchor="middle">40</text>
<text x="1524.2" y="655.8" font-size="12.8" fill="#fff" text-anchor="middle">60</text>
<text x="1565.6" y="655.8" font-size="12.8" fill="#fff" text-anchor="middle">80</text>
<text x="1607.0" y="655.8" font-size="12.8" fill="#fff" text-anchor="middle">100</text>
<text x="1648.5" y="655.8" font-size="12.8" fill="#fff" text-anchor="middle">120</text>
<text x="1689.9" y="655.8" font-size="12.8" fill="#fff" text-anchor="middle">140</text>
<text x="1731.3" y="655.8" font-size="12.8" fill="#fff" text-anchor="middle">160</text>
<text x="1772.7" y="655.8" font-size="12.8" fill="#fff" text-anchor="middle">180</text>
<text x="1814.1" y="655.8" font-size="12.8" fill="#fff" text-anchor="middle">200</text>
<text x="1855.5" y="655.8" font-size="12.8" fill="#fff" text-anchor="middle">220</text>
<text x="1557.5" y="680.2" font-size="17.05" fill="#fff" text-anchor="middle">Distance Difference (km)</text>
<text transform="translate(1178.8,540.6) rotate(-90) scale(0.84,1)" font-size="18.6" font-weight="bold" fill="#fff" text-anchor="middle">Magnitude (dB)</text>
</svg>
<div style="left:925.4px;top:696px;width:987px;height:6px;background:#8a8a8a;"></div>
<div style="left:925.4px;top:702px;width:987px;height:25.6px;background:#0f2c4c;"></div>
<span class="t" style="left:1422.8px;transform:translateX(-50%);top:705.81px;font-size:18px;color:#fff;">TII Carriers</span>
<svg style="left:1860px;top:702px" width="52" height="26" viewBox="0 0 52 26">
<path d="M16 6 H31.6 L23.8 19 Z" fill="none" stroke="#dfe9f5" stroke-width="1.1"/>
<path d="M41 5.6 L54 19.4 M54 5.6 L41 19.4" stroke="#e0662a" stroke-width="3.7" fill="none"/>
</svg>
<div style="left:925.4px;top:727.6px;width:987px;height:243.2px;background:#000;"></div>
<div style="left:925.4px;top:970.6px;width:987px;height:6.4px;background:#8a8a8a;"></div>
<svg style="left:926px;top:728px" width="986" height="243" viewBox="926 728 986 243">
<line x1="1085.5" y1="746.9" x2="1085.5" y2="912.2" stroke="#a4a4a4" stroke-width="1"/>
<line x1="1166.5" y1="746.9" x2="1166.5" y2="912.2" stroke="#a4a4a4" stroke-width="1"/>
<line x1="1246.5" y1="746.9" x2="1246.5" y2="912.2" stroke="#a4a4a4" stroke-width="1"/>
<line x1="1327.5" y1="746.9" x2="1327.5" y2="912.2" stroke="#a4a4a4" stroke-width="1"/>
<line x1="1407.5" y1="746.9" x2="1407.5" y2="912.2" stroke="#a4a4a4" stroke-width="1"/>
<line x1="1487.5" y1="746.9" x2="1487.5" y2="912.2" stroke="#a4a4a4" stroke-width="1"/>
<line x1="1568.5" y1="746.9" x2="1568.5" y2="912.2" stroke="#a4a4a4" stroke-width="1"/>
<line x1="1648.5" y1="746.9" x2="1648.5" y2="912.2" stroke="#a4a4a4" stroke-width="1"/>
<line x1="1729.5" y1="746.9" x2="1729.5" y2="912.2" stroke="#a4a4a4" stroke-width="1"/>
<line x1="1809.5" y1="746.9" x2="1809.5" y2="912.2" stroke="#a4a4a4" stroke-width="1"/>
<line x1="1034.8" y1="780.5" x2="1859.6" y2="780.5" stroke="#a4a4a4" stroke-width="1"/>
<line x1="1034.8" y1="814.5" x2="1859.6" y2="814.5" stroke="#a4a4a4" stroke-width="1"/>
<line x1="1034.8" y1="847.5" x2="1859.6" y2="847.5" stroke="#a4a4a4" stroke-width="1"/>
<line x1="1034.8" y1="880.5" x2="1859.6" y2="880.5" stroke="#a4a4a4" stroke-width="1"/>
<rect x="1034.8" y="746.9" width="824.8" height="165.3" fill="none" stroke="#a8a8a8" stroke-width="1.6"/>
<line x1="1035.8" y1="910.5" x2="1858.6" y2="910.5" stroke="#9c9c9c" stroke-width="1.2"/>
<line x1="1756.7" y1="910.2" x2="1858.6" y2="910.2" stroke="#d0d0d0" stroke-width="1.5"/>
<line x1="1035.8" y1="910.3" x2="1138.7" y2="910.3" stroke="#c4c4c4" stroke-width="1.4"/>
<line x1="1138.7" y1="747.9" x2="1138.7" y2="912.2" stroke="#dede2c" stroke-width="2.1" stroke-dasharray="2 2"/>
<line x1="1293.2" y1="747.9" x2="1293.2" y2="912.2" stroke="#dede2c" stroke-width="2.1" stroke-dasharray="2 2"/>
<line x1="1447.7" y1="747.9" x2="1447.7" y2="912.2" stroke="#dede2c" stroke-width="2.1" stroke-dasharray="2 2"/>
<line x1="1602.2" y1="747.9" x2="1602.2" y2="912.2" stroke="#dede2c" stroke-width="2.1" stroke-dasharray="2 2"/>
<line x1="1756.7" y1="747.9" x2="1756.7" y2="912.2" stroke="#dede2c" stroke-width="2.1" stroke-dasharray="2 2"/>
<path d="M1216.45 911 L1216.70 787.4 L1218.30 787.4 L1218.55 911 Z" fill="#ececec"/>
<path d="M1235.85 911 L1236.10 748.2 L1237.70 748.2 L1237.95 911 Z" fill="#ececec"/>
<path d="M1254.85 911 L1255.10 771.0 L1256.70 771.0 L1256.95 911 Z" fill="#ececec"/>
<path d="M1274.25 911 L1274.50 774.7 L1276.10 774.7 L1276.35 911 Z" fill="#ececec"/>
<path d="M1370.95 911 L1371.20 819.7 L1372.80 819.7 L1373.05 911 Z" fill="#ececec"/>
<path d="M1389.95 911 L1390.20 810.5 L1391.80 810.5 L1392.05 911 Z" fill="#ececec"/>
<path d="M1409.35 911 L1409.60 829.8 L1411.20 829.8 L1411.45 911 Z" fill="#ececec"/>
<path d="M1428.85 911 L1429.10 837.9 L1430.70 837.9 L1430.95 911 Z" fill="#ececec"/>
<path d="M1525.85 911 L1526.10 782.2 L1527.70 782.2 L1527.95 911 Z" fill="#ececec"/>
<path d="M1545.15 911 L1545.40 781.6 L1547.00 781.6 L1547.25 911 Z" fill="#ececec"/>
<path d="M1564.85 911 L1565.10 772.9 L1566.70 772.9 L1566.95 911 Z" fill="#ececec"/>
<path d="M1583.55 911 L1583.80 779.6 L1585.40 779.6 L1585.65 911 Z" fill="#ececec"/>
<path d="M1680.25 911 L1680.50 791.7 L1682.10 791.7 L1682.35 911 Z" fill="#ececec"/>
<path d="M1699.35 911 L1699.60 822.0 L1701.20 822.0 L1701.45 911 Z" fill="#ececec"/>
<path d="M1718.95 911 L1719.20 803.0 L1720.80 803.0 L1721.05 911 Z" fill="#ececec"/>
<path d="M1737.95 911 L1738.20 822.9 L1739.80 822.9 L1740.05 911 Z" fill="#ececec"/>
<path d="M1421.66 911 L1422.76 901.4 L1423.86 911 Z" fill="#9a9a9a"/>
<path d="M1529.08 911 L1530.18 905.6 L1531.28 911 Z" fill="#9a9a9a"/>
<path d="M1575.35 911 L1576.45 906.4 L1577.55 911 Z" fill="#9a9a9a"/>
<path d="M1620.41 911 L1621.51 906.4 L1622.61 911 Z" fill="#9a9a9a"/>
<path d="M1736.28 911 L1737.38 905.6 L1738.48 911 Z" fill="#9a9a9a"/>
<path d="M1313.83 911 L1314.93 908.1 L1316.03 911 Z" fill="#9a9a9a"/>
<path d="M1366.13 911 L1367.23 908.1 L1368.33 911 Z" fill="#9a9a9a"/>
<path d="M1333.95 911 L1335.05 909.4 L1336.15 911 Z" fill="#9a9a9a"/>
<path d="M1344.01 911 L1345.11 909.7 L1346.21 911 Z" fill="#9a9a9a"/>
<text x="1022" y="752.0" font-size="16.2" fill="#fff" text-anchor="end">1.0</text>
<text x="1022" y="785.3" font-size="16.2" fill="#fff" text-anchor="end">0.8</text>
<text x="1022" y="818.6" font-size="16.2" fill="#fff" text-anchor="end">0.6</text>
<text x="1022" y="851.9" font-size="16.2" fill="#fff" text-anchor="end">0.4</text>
<text x="1022" y="885.2" font-size="16.2" fill="#fff" text-anchor="end">0.2</text>
<text x="1022" y="918.5" font-size="16.2" fill="#fff" text-anchor="end">0.0</text>
<text x="1085.1" y="931.6" font-size="16.2" fill="#fff" text-anchor="middle">-900</text>
<text x="1165.6" y="931.6" font-size="16.2" fill="#fff" text-anchor="middle">-700</text>
<text x="1246.0" y="931.6" font-size="16.2" fill="#fff" text-anchor="middle">-500</text>
<text x="1326.5" y="931.6" font-size="16.2" fill="#fff" text-anchor="middle">-300</text>
<text x="1407.0" y="931.6" font-size="16.2" fill="#fff" text-anchor="middle">-100</text>
<text x="1487.4" y="931.6" font-size="16.2" fill="#fff" text-anchor="middle">100</text>
<text x="1567.9" y="931.6" font-size="16.2" fill="#fff" text-anchor="middle">300</text>
<text x="1648.4" y="931.6" font-size="16.2" fill="#fff" text-anchor="middle">500</text>
<text x="1728.8" y="931.6" font-size="16.2" fill="#fff" text-anchor="middle">700</text>
<text x="1809.3" y="931.6" font-size="16.2" fill="#fff" text-anchor="middle">900</text>
<text x="1447.4" y="956" font-size="16.9" fill="#fff" text-anchor="middle">TII Subcarrier</text>
<text transform="translate(979.3,829.2) rotate(-90) scale(0.864,1)" font-size="17.5" font-weight="bold" fill="#fff" text-anchor="middle">Magnitude</text>
</svg>
</div></body></html>
